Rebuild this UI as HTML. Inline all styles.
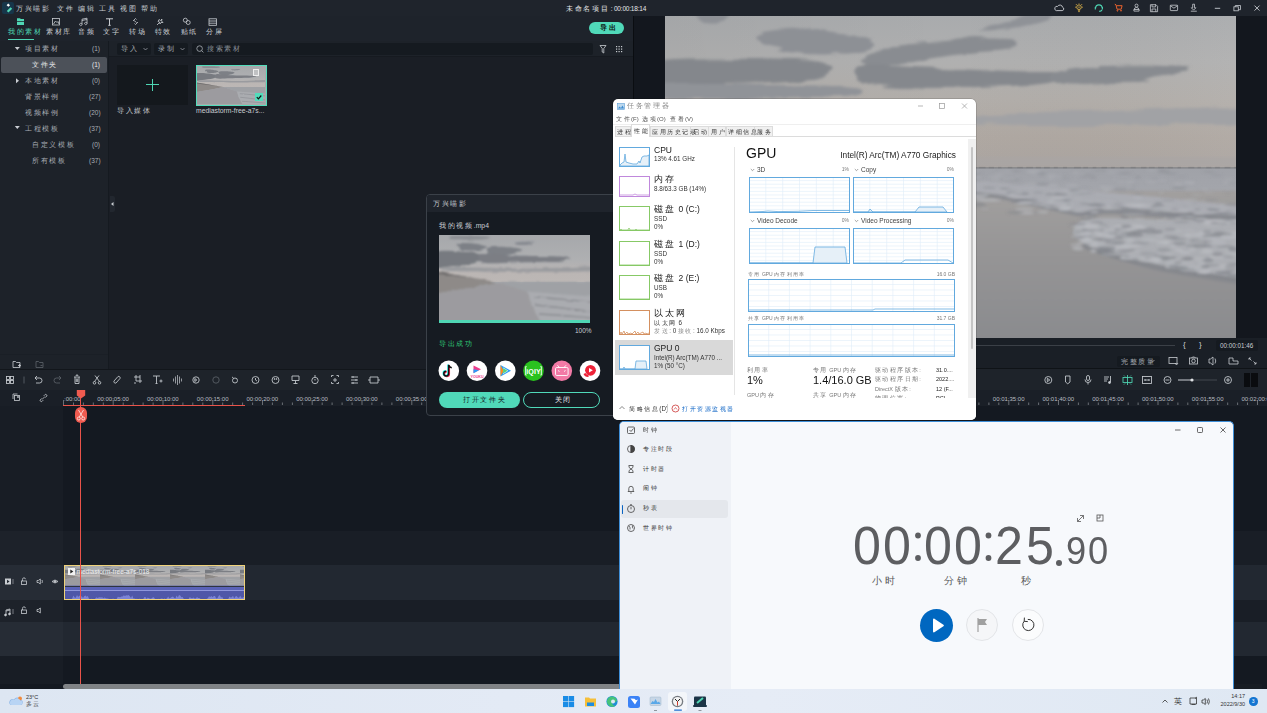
<!DOCTYPE html>
<html><head><meta charset="utf-8">
<style>
*{margin:0;padding:0;box-sizing:border-box}
body{width:1267px;height:713px;overflow:hidden;background:#141921;position:relative;font-family:"Liberation Sans",sans-serif;color:#c9ccd1}
.a{position:absolute}
.t{position:absolute;white-space:nowrap;line-height:1}
.z{letter-spacing:.25em}
</style></head><body>

<svg width="0" height="0" style="position:absolute">
 <defs>
  <linearGradient id="bsky" x1="0" y1="0" x2="0" y2="1"><stop offset="0" stop-color="#a6a8ab"/><stop offset=".3" stop-color="#afb0b2"/><stop offset=".45" stop-color="#bbb6b4"/><stop offset=".55" stop-color="#bcb7b5"/><stop offset=".56" stop-color="#a5a7ab"/><stop offset="1" stop-color="#9d9ea2"/></linearGradient>
  <filter id="bb" x="-10%" y="-10%" width="120%" height="120%"><feTurbulence type="fractalNoise" baseFrequency="0.08 0.35" numOctaves="2" seed="9" result="n"/><feDisplacementMap in="SourceGraphic" in2="n" scale="3" xChannelSelector="R" yChannelSelector="G" result="d"/><feGaussianBlur in="d" stdDeviation="1"/></filter>
  <symbol id="beach" viewBox="0 0 151 85" preserveAspectRatio="none">
   <rect width="151" height="85" fill="url(#bsky)"/>
   <g filter="url(#bb)"><path d="M12.0 1.2C14.5 0.6 23.6 0.7 30.0 0.8C36.4 0.9 48.4 1.4 50.6 2.0C52.8 2.6 48.9 3.9 43.0 4.3C37.1 4.7 20.2 4.8 15.0 4.3C9.8 3.8 9.5 1.8 12.0 1.2Z" fill="#8a8d92"/><path d="M18.0 8.9C19.3 7.8 27.1 7.8 32.0 8.2C36.9 8.6 46.0 10.2 47.5 11.3C49.0 12.4 44.9 14.4 41.0 15.0C37.1 15.6 28.2 16.0 24.4 15.0C20.6 14.0 16.7 10.0 18.0 8.9Z" fill="#7d8086"/><path d="M49.0 12.8C51.6 11.8 60.3 11.7 66.0 12.0C71.7 12.3 81.2 13.4 83.0 14.4C84.8 15.4 80.6 17.2 77.0 18.2C73.4 19.2 65.8 20.5 61.4 20.5C57.0 20.5 52.7 19.5 50.6 18.2C48.5 16.9 46.4 13.8 49.0 12.8Z" fill="#7d8086"/><path d="M77.0 7.4C79.8 6.9 93.4 6.2 95.4 6.6C97.4 7.0 92.0 9.2 89.2 9.7C86.4 10.2 80.4 10.1 78.4 9.7C76.4 9.3 74.2 7.9 77.0 7.4Z" fill="#868990"/><path d="M-2.0 16.7C4.2 14.4 27.7 17.3 35.2 18.2C42.7 19.1 43.0 20.3 43.0 22.0C43.0 23.7 40.4 26.6 35.2 28.2C30.0 29.8 18.2 30.7 12.0 31.3C5.8 31.9 0.3 34.4 -2.0 32.0C-4.3 29.6 -8.2 19.0 -2.0 16.7Z" fill="#777a80"/><path d="M43.0 18.2C48.1 17.0 59.7 19.9 73.8 20.5C87.9 21.1 120.1 21.1 127.8 22.0C135.5 22.9 129.0 25.0 120.0 25.9C111.0 26.8 86.6 27.2 73.8 27.5C61.0 27.8 48.1 29.1 43.0 27.5C37.9 25.9 37.9 19.4 43.0 18.2Z" fill="#7b7e84"/><path d="M12.0 32.0C24.8 31.6 65.5 33.7 89.0 33.6C112.5 33.5 142.3 31.1 153.0 31.5C163.7 31.9 163.7 35.1 153.0 36.0C142.3 36.9 112.5 36.7 89.0 36.7C65.5 36.7 24.8 36.8 12.0 36.0C-0.8 35.2 -0.8 32.4 12.0 32.0Z" fill="#9a9b9f"/>
    <path d="M-2 36.7 L19.8 40.5 58.3 47.2 35.2 52.2 -2 58.3Z" fill="#8e8a88"/>
    <path d="M-2 36.7 L19.8 40.5 58.3 47.2 40 44 -2 39Z" fill="#6f6d6d"/>
    <path d="M-2 58.3 L35.2 52.2 58.3 47.2 89 56.8 92 69 101.5 87 H-2Z" fill="#9c9b9f"/>
    <path d="M58.3 47.2 L153 47 153 61.4 89 56.8Z" fill="#9fa1a5"/>
    <path d="M89 56.8 L153 61.4 153 87 101.5 87 92 69Z" fill="#aaacb0"/>
    <path d="M95 62 C115 63 135 66 153 67 M96 70 C118 72 135 75 153 76 M100 79 C120 80 140 82 153 83" stroke="#8a8c91" stroke-width="1.3" fill="none"/>
   </g>
  </symbol>
 </defs>
</svg>
<!-- title bar -->
<div class="a" id="titlebar" style="left:0;top:0;width:1267px;height:16px;background:#1f242c">
 <div class="a" style="left:2px;top:2px;width:12px;height:12px;background:#17364a;border-radius:2px"></div>
 <svg class="a" style="left:2px;top:2px" width="12" height="12" viewBox="0 0 12 12"><path d="M6.2 1.6 L8 3.2 6.4 4.8 4.6 3.2Z" fill="#fff"/><path d="M8.6 5.2 L10.2 6.8 6.4 10.6 4.8 9Z" fill="#4fd6b4"/></svg>
 <span class="t" style="left:16px;top:5.5px;font-size:6.5px;color:#c9cdd2"><span class="z">万兴喵影</span></span>
 <span class="t" style="left:57px;top:5.5px;font-size:6.5px;color:#c9cdd2"><span class="z">文件</span></span>
 <span class="t" style="left:78px;top:5.5px;font-size:6.5px;color:#c9cdd2"><span class="z">编辑</span></span>
 <span class="t" style="left:99px;top:5.5px;font-size:6.5px;color:#c9cdd2"><span class="z">工具</span></span>
 <span class="t" style="left:120px;top:5.5px;font-size:6.5px;color:#c9cdd2"><span class="z">视图</span></span>
 <span class="t" style="left:141px;top:5.5px;font-size:6.5px;color:#c9cdd2"><span class="z">帮助</span></span>
 <span class="t" style="left:566px;top:5.5px;font-size:6.5px;color:#e6e8ea;letter-spacing:-.2px"><span class="z">未命名项目</span> : 00:00:18:14</span>
 <svg class="a" style="left:1050px;top:0" width="217" height="16" viewBox="0 0 217 16" fill="none" stroke-width=".9">
  <path d="M6.3 10.6H12.2A1.7 1.7 0 0 0 12.6 7.3 2.7 2.7 0 0 0 7.6 6.4 2.1 2.1 0 0 0 6.3 10.6Z" stroke="#c9cdd2"/>
  <g stroke="#d9b04a"><circle cx="29" cy="7.2" r="2.3"/><path d="M27.9 10.2h2.2M28.2 11.6h1.6M26 4.2l.8.8M32 4.2l-.8.8M25.2 7.2h1M31.8 7.2h1M29 3.5v.8"/><path d="M28.3 7.8l.7-1.3.7 1.3" stroke-width=".6"/></g>
  <g stroke="#4fd6b4" stroke-width="1.1"><path d="M45.6 8.2A3.3 3.3 0 0 1 52.2 8.2"/><path d="M45.3 7v2.6M52.4 7v2.6"/><path d="M52 9.8q-.6 1.6-2.8 1.6" /></g>
  <g stroke="#e8622e" stroke-width="1"><path d="M64.8 4.2l1.2.6 1 4.4h4.2l.9-3.5h-5.6"/><circle cx="67.4" cy="10.7" r=".5"/><circle cx="71" cy="10.7" r=".5"/></g>
  <g stroke="#c9cdd2" stroke-width=".8"><circle cx="86.5" cy="5.6" r="1.5"/><path d="M84.2 9.5q0-2 2.3-2t2.3 2M83.9 9.5h5.2v1.6h-5.2Z"/></g>
  <g stroke="#c9cdd2" stroke-width=".8"><path d="M100.4 4.7h5.6l1.6 1.6v5.4h-7.2Z"/><path d="M102 4.7v2.2h3.6V4.7M102 11.7V9h3.8v2.7"/></g>
  <g stroke="#c9cdd2" stroke-width=".8"><rect x="120.3" y="5.2" width="7.3" height="5.4" rx=".5"/><path d="M120.3 5.6l3.65 2.6 3.65-2.6"/></g>
  <g stroke="#c9cdd2" stroke-width=".8"><path d="M142.7 4.2h1.8v3.6h1.4l-2.3 2.3-2.3-2.3h1.4Z"/><path d="M140.8 11.2h6"/></g>
  <path d="M164.8 8.3h5.4" stroke="#c9cdd2"/>
  <g stroke="#c9cdd2" stroke-width=".8"><rect x="183.9" y="6.8" width="4.4" height="4"/><path d="M185.3 6.8V5.5h5.2v4.2h-2.2"/></g>
  <path d="M204.5 5.6l5 5M209.5 5.6l-5 5" stroke="#c9cdd2"/>
 </svg>
</div>
<!-- toolbar -->
<div class="a" id="toolbar" style="left:0;top:16px;width:633px;height:25px;background:#1e232b">
 <svg class="a" style="left:0;top:0" width="230" height="12" viewBox="0 0 230 12" fill="none" stroke="#c9cdd2" stroke-width="0.8">
  <path d="M17 2.2h3l.8.8H24v2H17Z M17 5.8h7v3.2h-7Z" fill="#4fd6b4" stroke="none"/>
  <rect x="52.5" y="2.5" width="7" height="6.5"/><path d="M53.5 8l2-3 1.5 1.5 1-1 1 2.5"/>
  <path d="M82 8.5a1.2 1.2 0 1 1 0-.1V3.2l5-1v5.3a1.2 1.2 0 1 1 0-.1M82 4.5l5-1"/>
  <path d="M106 2.8h7M109.5 2.8v6.5M108.3 9.3h2.4" stroke-width="1"/>
  <path d="M133 5l2.5-2.5 1 1M138 6l-2.5 2.5-1-1M134 4.5l2.5 2"/>
  <path d="M157 9l2.5-2.5M159 3.5l1.5 1 1.5-1.5-.5 2 1.5 1.5h-2l-1 1.5-.5-2-1.5-.5Z"/>
  <circle cx="185.3" cy="4.2" r="2"/><circle cx="188.2" cy="6.5" r="2"/>
  <rect x="209" y="2.8" width="7.5" height="6.5"/><path d="M209 5h7.5M209 7.2h7.5"/>
 </svg>
 <span class="t" style="left:8px;top:13px;font-size:6.5px;color:#4fd6b4"><span class="z">我的素材</span></span>
 <span class="t" style="left:46px;top:13px;font-size:6.5px;color:#c9cdd2"><span class="z">素材库</span></span>
 <span class="t" style="left:78px;top:13px;font-size:6.5px;color:#c9cdd2"><span class="z">音频</span></span>
 <span class="t" style="left:103px;top:13px;font-size:6.5px;color:#c9cdd2"><span class="z">文字</span></span>
 <span class="t" style="left:129px;top:13px;font-size:6.5px;color:#c9cdd2"><span class="z">转场</span></span>
 <span class="t" style="left:154.5px;top:13px;font-size:6.5px;color:#c9cdd2"><span class="z">特效</span></span>
 <span class="t" style="left:180.5px;top:13px;font-size:6.5px;color:#c9cdd2"><span class="z">贴纸</span></span>
 <span class="t" style="left:206px;top:13px;font-size:6.5px;color:#c9cdd2"><span class="z">分屏</span></span>
 <div class="a" style="left:8px;top:23px;width:26px;height:1.3px;background:#4fd6b4"></div>
 <div class="a" style="left:589px;top:6px;width:35px;height:12px;background:#50d9b9;border-radius:6px"></div>
 <span class="t" style="left:600px;top:9px;font-size:6.5px;color:#0b1512;font-weight:bold"><span class="z">导出</span></span>
</div>
<!-- left panel -->
<div class="a" id="leftpanel" style="left:0;top:41px;width:108px;height:328px;background:#1d2229">
 <div class="a" style="left:1px;top:16px;width:106px;height:16px;background:#4c5159;border-radius:2px"></div>
 <svg class="a" style="left:0;top:0" width="30" height="100" viewBox="0 0 30 100" fill="#c9cdd2"><path d="M14.8 6h5l-2.5 3Z"/><path d="M16 37.2v5l3-2.5Z"/><path d="M14.8 85h5l-2.5 3Z"/></svg>
 <span class="t" style="left:25px;top:4.5px;font-size:6.5px;color:#a9aeb5"><span class="z">项目素材</span></span><span class="t" style="left:92px;top:4.5px;font-size:6.5px;color:#a9aeb5">(1)</span>
 <span class="t" style="left:32px;top:20.5px;font-size:6.5px;color:#e8eaec"><span class="z">文件夹</span></span><span class="t" style="left:92px;top:20.5px;font-size:6.5px;color:#e8eaec">(1)</span>
 <span class="t" style="left:25px;top:36.5px;font-size:6.5px;color:#a9aeb5"><span class="z">本地素材</span></span><span class="t" style="left:92px;top:36.5px;font-size:6.5px;color:#a9aeb5">(0)</span>
 <span class="t" style="left:25px;top:52.5px;font-size:6.5px;color:#a9aeb5"><span class="z">背景样例</span></span><span class="t" style="left:89px;top:52.5px;font-size:6.5px;color:#a9aeb5">(27)</span>
 <span class="t" style="left:25px;top:68.5px;font-size:6.5px;color:#a9aeb5"><span class="z">视频样例</span></span><span class="t" style="left:89px;top:68.5px;font-size:6.5px;color:#a9aeb5">(20)</span>
 <span class="t" style="left:25px;top:84.5px;font-size:6.5px;color:#a9aeb5"><span class="z">工程模板</span></span><span class="t" style="left:89px;top:84.5px;font-size:6.5px;color:#a9aeb5">(37)</span>
 <span class="t" style="left:32px;top:100.5px;font-size:6.5px;color:#a9aeb5"><span class="z">自定义模板</span></span><span class="t" style="left:92px;top:100.5px;font-size:6.5px;color:#a9aeb5">(0)</span>
 <span class="t" style="left:32px;top:116.5px;font-size:6.5px;color:#a9aeb5"><span class="z">所有模板</span></span><span class="t" style="left:89px;top:116.5px;font-size:6.5px;color:#a9aeb5">(37)</span>
 <div class="a" style="left:0;top:313px;width:108px;height:1px;background:#1a1f26"></div>
 <svg class="a" style="left:10px;top:318px" width="40" height="10" viewBox="0 0 40 10" fill="none" stroke-width="0.8">
  <path d="M3 2.5h2.5l1 1H10v5H3Z M8 6.5h3M9.5 5v3" stroke="#c9cdd2"/>
  <path d="M26 2.5h2.5l1 1H33v5h-7Z M30.5 6.5h2" stroke="#5d636b"/>
 </svg>
</div>
<div class="a" style="left:108px;top:41px;width:1px;height:328px;background:#151a20"></div>
<!-- media area -->
<div class="a" id="media" style="left:109px;top:41px;width:524px;height:328px;background:#1a1e25">
 <div class="a" style="left:0;top:0;width:524px;height:16px;background:#1d2229"></div>
 <div class="a" style="left:8px;top:2px;width:34px;height:12px;background:#151a20;border-radius:2px"></div>
 <span class="t" style="left:12px;top:5px;font-size:6.5px;color:#a9aeb5"><span class="z">导入</span></span>
 <svg class="a" style="left:34px;top:6px" width="5" height="4" viewBox="0 0 5 4"><path d="M.5 1l2 2 2-2" fill="none" stroke="#a9aeb5" stroke-width=".7"/></svg>
 <div class="a" style="left:45px;top:2px;width:34px;height:12px;background:#151a20;border-radius:2px"></div>
 <span class="t" style="left:49px;top:5px;font-size:6.5px;color:#a9aeb5"><span class="z">录制</span></span>
 <svg class="a" style="left:71px;top:6px" width="5" height="4" viewBox="0 0 5 4"><path d="M.5 1l2 2 2-2" fill="none" stroke="#a9aeb5" stroke-width=".7"/></svg>
 <div class="a" style="left:83px;top:2px;width:401px;height:12px;background:#151a20;border-radius:2px"></div>
 <svg class="a" style="left:86px;top:3px" width="10" height="10" viewBox="0 0 10 10"><circle cx="4.6" cy="4.6" r="2.8" fill="none" stroke="#a9aeb5" stroke-width=".8"/><path d="M6.6 6.6l1.8 1.8" stroke="#a9aeb5" stroke-width=".8"/></svg>
 <span class="t" style="left:98px;top:5px;font-size:6.5px;color:#8a9098"><span class="z">搜索素材</span></span>
 <svg class="a" style="left:489px;top:3px" width="30" height="10" viewBox="0 0 30 10" fill="none" stroke="#c9cdd2" stroke-width=".8"><path d="M2 1.5h6L5.8 4.5V9L4.2 8V4.5Z"/><g fill="#c9cdd2" stroke="none"><rect x="18" y="2" width="1.2" height="1.2"/><rect x="20.5" y="2" width="1.2" height="1.2"/><rect x="23" y="2" width="1.2" height="1.2"/><rect x="18" y="4.5" width="1.2" height="1.2"/><rect x="20.5" y="4.5" width="1.2" height="1.2"/><rect x="23" y="4.5" width="1.2" height="1.2"/><rect x="18" y="7" width="1.2" height="1.2"/><rect x="20.5" y="7" width="1.2" height="1.2"/><rect x="23" y="7" width="1.2" height="1.2"/></g></svg>
 <div class="a" style="left:0;top:15px;width:524px;height:1px;background:#161a20"></div>
 <div class="a" style="left:8px;top:24px;width:71px;height:40px;background:#14181d"></div>
 <div class="a" style="left:42.8px;top:37.5px;width:1.3px;height:12.5px;background:#4fd6b4"></div>
 <div class="a" style="left:37px;top:43.2px;width:13px;height:1.3px;background:#4fd6b4"></div>
 <span class="t" style="left:8px;top:66.5px;font-size:6.5px;color:#c9cdd2"><span class="z">导入媒体</span></span>
 <div class="a" id="mthumb" style="left:87px;top:24px;width:71px;height:41px;border:1.5px solid #52dcbb;overflow:hidden;background:#aaa"><svg class="a" style="left:0;top:0" width="68" height="38"><use href="#beach"/></svg></div>
 <div class="a" style="left:144px;top:28px;width:6px;height:7px;border:1px solid #eee;background:rgba(255,255,255,.25)"></div>
 <div class="a" style="left:146px;top:52px;width:8px;height:8px;background:#52dcbb"></div>
 <svg class="a" style="left:146px;top:52px" width="8" height="8" viewBox="0 0 8 8"><path d="M1.8 4.2l1.6 1.6L6.3 2.5" fill="none" stroke="#111" stroke-width="1.2"/></svg>
 <span class="t" style="left:87px;top:66.5px;font-size:6.8px;color:#c9cdd2">mediastorm-free-a7s...</span>
 <div class="a" style="left:1px;top:155px;width:5px;height:16px;background:#22272f;border-radius:0 2px 2px 0"></div>
 <svg class="a" style="left:1px;top:160px" width="5" height="6" viewBox="0 0 5 6"><path d="M3.5 1v4L1 3Z" fill="#c9cdd2"/></svg>
</div>
<!-- preview -->
<div class="a" id="preview" style="left:633px;top:16px;width:634px;height:353px;background:#13171e"></div>
<div class="a" style="left:632.5px;top:16px;width:1.5px;height:353px;background:#0a0d11"></div>
<svg class="a" id="pimg" style="left:665px;top:16px" width="571" height="322" viewBox="0 0 571 322">
 <defs>
  <linearGradient id="psky" x1="0" y1="0" x2="0" y2="1"><stop offset="0" stop-color="#a9abad"/><stop offset=".3" stop-color="#b0b0b0"/><stop offset=".55" stop-color="#b2aeaa"/><stop offset=".8" stop-color="#afa8a2"/><stop offset="1" stop-color="#aba5a1"/></linearGradient>
  <linearGradient id="psea" x1="0" y1="0" x2="0" y2="1"><stop offset="0" stop-color="#a0a2a8"/><stop offset=".12" stop-color="#a3a5ab"/><stop offset=".3" stop-color="#9a9ca2"/><stop offset=".6" stop-color="#909196"/><stop offset="1" stop-color="#8b8c8f"/></linearGradient>
  <linearGradient id="skyx" x1="0" y1="0" x2="1" y2="0"><stop offset="0" stop-color="#000" stop-opacity=".03"/><stop offset=".5" stop-color="#000" stop-opacity="0"/><stop offset="1" stop-color="#fff" stop-opacity=".04"/></linearGradient>
  <filter id="bl1" x="-10%" y="-10%" width="120%" height="120%"><feGaussianBlur stdDeviation="1.8"/></filter>
  <filter id="bl3" x="-10%" y="-10%" width="120%" height="120%"><feGaussianBlur stdDeviation="3"/></filter>
  <linearGradient id="psand" gradientUnits="userSpaceOnUse" x1="0" y1="176" x2="0" y2="322"><stop offset="0" stop-color="#a19f9e"/><stop offset=".45" stop-color="#959495"/><stop offset="1" stop-color="#8a8b8e"/></linearGradient>
  <filter id="cloudf" x="-5%" y="-20%" width="110%" height="140%"><feTurbulence type="fractalNoise" baseFrequency="0.02 0.12" numOctaves="3" seed="4" result="n"/><feDisplacementMap in="SourceGraphic" in2="n" scale="10" xChannelSelector="R" yChannelSelector="G" result="d"/><feGaussianBlur in="d" stdDeviation="1.8"/></filter>
  <clipPath id="pclip"><rect width="571" height="322"/></clipPath>
 </defs>
 <g clip-path="url(#pclip)">
 <rect width="571" height="152" fill="url(#psky)"/>
 <rect width="571" height="152" fill="url(#skyx)"/>
 <rect y="152" width="571" height="170" fill="url(#psea)"/>
 <g filter="url(#cloudf)"><path d="M31.5 -2.0C34.5 -3.2 60.0 -3.2 63.0 -2.0C66.0 -0.8 57.0 5.6 54.0 6.8C51.0 8.0 43.5 8.0 40.5 6.8C37.5 5.6 28.5 -0.8 31.5 -2.0Z" fill="#8e9196"/><path d="M92.4 18.0C96.6 15.5 122.1 12.3 135.0 12.6C147.9 12.9 178.8 18.4 189.0 20.3C199.2 22.2 210.6 24.9 211.8 27.0C213.0 29.1 206.4 34.5 198.0 36.0C189.6 37.5 161.3 38.9 148.7 38.3C136.1 37.7 111.1 34.2 103.6 31.5C96.1 28.8 88.2 20.5 92.4 18.0Z" fill="#8d9095"/><path d="M198.0 42.8C200.9 39.6 221.3 30.6 234.0 28.0C246.7 25.4 277.3 23.8 293.0 23.4C308.7 23.0 344.9 23.4 351.5 24.8C358.1 26.2 351.0 32.0 342.5 33.8C334.0 35.6 301.3 36.8 288.0 38.3C274.7 39.8 253.1 43.2 243.0 45.0C232.9 46.8 218.0 52.1 212.0 51.8C206.0 51.5 195.1 46.0 198.0 42.8Z" fill="#898c91"/><path d="M194.0 49.6C203.6 47.5 244.2 50.9 270.0 51.8C295.8 52.7 373.1 54.2 387.6 56.3C402.1 58.4 394.2 65.5 378.5 67.6C362.8 69.7 294.1 72.0 270.0 72.0C245.9 72.0 208.1 70.6 198.0 67.6C187.9 64.6 184.4 51.7 194.0 49.6Z" fill="#85888d"/><path d="M-5.0 45.0C4.7 41.7 47.1 42.8 67.6 42.8C88.1 42.8 135.5 43.8 148.7 45.0C161.9 46.2 166.7 49.4 166.7 51.8C166.7 54.2 161.9 60.9 148.7 63.0C135.5 65.1 88.1 67.0 67.6 67.6C47.1 68.2 4.7 70.6 -5.0 67.6C-14.7 64.6 -14.7 48.3 -5.0 45.0Z" fill="#84878c"/><path d="M-5.0 68.0C7.7 66.4 64.1 69.3 90.0 69.8C115.9 70.3 177.0 70.5 189.0 72.0C201.0 73.5 205.9 79.7 180.0 81.0C154.1 82.3 19.7 83.7 -5.0 82.0C-29.7 80.3 -17.7 69.6 -5.0 68.0Z" fill="#909398"/><path d="M387.6 56.3C392.4 54.0 414.8 51.4 428.0 50.5C441.2 49.6 474.1 49.3 486.7 49.6C499.3 49.9 522.8 51.2 522.8 53.0C522.8 54.8 499.3 60.8 486.7 63.0C474.1 65.2 440.6 69.2 428.0 69.8C415.4 70.4 397.4 69.4 392.0 67.6C386.6 65.8 382.8 58.6 387.6 56.3Z" fill="#888b90"/><path d="M315.5 13.5C316.7 12.0 341.9 4.4 351.5 2.3C361.1 0.2 384.0 -2.6 387.6 -2.0C391.2 -1.4 384.5 4.7 378.5 6.8C372.5 8.9 350.9 12.6 342.5 13.5C334.1 14.4 314.3 15.0 315.5 13.5Z" fill="#8f9297"/><path d="M315.5 99.0C329.4 97.3 385.4 95.9 420.0 95.0C454.6 94.1 554.3 90.3 575.0 92.0C595.7 93.7 595.7 105.7 575.0 108.0C554.3 110.3 454.6 109.0 420.0 109.0C385.4 109.0 329.4 109.3 315.5 108.0C301.6 106.7 301.6 100.7 315.5 99.0Z" fill="#a1a2a5"/></g>
 <rect x="-10" y="141" width="591" height="10" fill="#a9a6a6" opacity=".6" filter="url(#bl1)"/>
 <rect x="0" y="151.3" width="571" height="1.2" fill="#7e8084"/><rect x="0.3" y="150.8" width="6.1" height="1.6" fill="#66686c" opacity=".3"/><rect x="9.9" y="150.8" width="4.9" height="1.6" fill="#66686c" opacity=".3"/><rect x="19.2" y="150.8" width="7.0" height="1.6" fill="#66686c" opacity=".3"/><rect x="28.3" y="150.8" width="6.6" height="1.6" fill="#66686c" opacity=".3"/><rect x="38.0" y="150.8" width="6.2" height="1.6" fill="#66686c" opacity=".3"/><rect x="47.7" y="150.8" width="4.9" height="1.6" fill="#66686c" opacity=".3"/><rect x="56.5" y="150.8" width="6.3" height="1.6" fill="#66686c" opacity=".3"/><rect x="67.2" y="150.8" width="3.5" height="1.6" fill="#66686c" opacity=".3"/><rect x="77.0" y="150.8" width="3.4" height="1.6" fill="#66686c" opacity=".3"/><rect x="86.1" y="150.8" width="5.3" height="1.6" fill="#66686c" opacity=".3"/><rect x="95.9" y="150.8" width="5.0" height="1.6" fill="#66686c" opacity=".3"/><rect x="104.2" y="150.8" width="3.8" height="1.6" fill="#66686c" opacity=".3"/><rect x="115.0" y="150.8" width="4.0" height="1.6" fill="#66686c" opacity=".3"/><rect x="122.6" y="150.8" width="3.1" height="1.6" fill="#66686c" opacity=".3"/><rect x="133.0" y="150.8" width="6.6" height="1.6" fill="#66686c" opacity=".3"/><rect x="141.8" y="150.8" width="5.8" height="1.6" fill="#66686c" opacity=".3"/><rect x="151.9" y="150.8" width="6.8" height="1.6" fill="#66686c" opacity=".3"/><rect x="161.9" y="150.8" width="6.9" height="1.6" fill="#66686c" opacity=".3"/><rect x="171.4" y="150.8" width="4.7" height="1.6" fill="#66686c" opacity=".3"/><rect x="180.4" y="150.8" width="5.9" height="1.6" fill="#66686c" opacity=".3"/><rect x="189.7" y="150.8" width="4.5" height="1.6" fill="#66686c" opacity=".3"/><rect x="198.9" y="150.8" width="6.2" height="1.6" fill="#66686c" opacity=".3"/><rect x="208.8" y="150.8" width="6.4" height="1.6" fill="#66686c" opacity=".3"/><rect x="218.1" y="150.8" width="3.5" height="1.6" fill="#66686c" opacity=".3"/><rect x="227.4" y="150.8" width="3.1" height="1.6" fill="#66686c" opacity=".3"/><rect x="238.0" y="150.8" width="3.9" height="1.6" fill="#66686c" opacity=".3"/><rect x="247.0" y="150.8" width="5.3" height="1.6" fill="#66686c" opacity=".3"/><rect x="256.4" y="150.8" width="4.5" height="1.6" fill="#66686c" opacity=".3"/><rect x="265.4" y="150.8" width="3.0" height="1.6" fill="#66686c" opacity=".3"/><rect x="275.9" y="150.8" width="6.3" height="1.6" fill="#66686c" opacity=".3"/><rect x="284.4" y="150.8" width="6.1" height="1.6" fill="#66686c" opacity=".3"/><rect x="294.0" y="150.8" width="4.9" height="1.6" fill="#66686c" opacity=".3"/><rect x="304.1" y="150.8" width="3.2" height="1.6" fill="#66686c" opacity=".3"/><rect x="313.9" y="150.8" width="6.6" height="1.6" fill="#66686c" opacity=".3"/><rect x="323.9" y="150.8" width="5.1" height="1.6" fill="#66686c" opacity=".3"/><rect x="333.0" y="150.8" width="3.3" height="1.6" fill="#66686c" opacity=".3"/><rect x="342.9" y="150.8" width="4.3" height="1.6" fill="#66686c" opacity=".3"/><rect x="352.3" y="150.8" width="5.5" height="1.6" fill="#66686c" opacity=".3"/><rect x="361.4" y="150.8" width="6.5" height="1.6" fill="#66686c" opacity=".3"/><rect x="370.9" y="150.8" width="4.9" height="1.6" fill="#66686c" opacity=".3"/><rect x="379.1" y="150.8" width="5.6" height="1.6" fill="#66686c" opacity=".3"/><rect x="388.9" y="150.8" width="3.8" height="1.6" fill="#66686c" opacity=".3"/><rect x="398.0" y="150.8" width="4.0" height="1.6" fill="#66686c" opacity=".3"/><rect x="409.2" y="150.8" width="6.6" height="1.6" fill="#66686c" opacity=".3"/><rect x="418.4" y="150.8" width="4.5" height="1.6" fill="#66686c" opacity=".3"/><rect x="427.8" y="150.8" width="3.4" height="1.6" fill="#66686c" opacity=".3"/><rect x="436.5" y="150.8" width="5.4" height="1.6" fill="#66686c" opacity=".3"/><rect x="446.2" y="150.8" width="3.5" height="1.6" fill="#66686c" opacity=".3"/><rect x="455.3" y="150.8" width="3.8" height="1.6" fill="#66686c" opacity=".3"/><rect x="465.8" y="150.8" width="4.8" height="1.6" fill="#66686c" opacity=".3"/><rect x="476.0" y="150.8" width="5.3" height="1.6" fill="#66686c" opacity=".3"/><rect x="484.1" y="150.8" width="5.5" height="1.6" fill="#66686c" opacity=".3"/><rect x="493.1" y="150.8" width="5.8" height="1.6" fill="#66686c" opacity=".3"/><rect x="502.9" y="150.8" width="4.8" height="1.6" fill="#66686c" opacity=".3"/><rect x="512.7" y="150.8" width="3.3" height="1.6" fill="#66686c" opacity=".3"/><rect x="523.3" y="150.8" width="5.9" height="1.6" fill="#66686c" opacity=".3"/><rect x="532.6" y="150.8" width="3.2" height="1.6" fill="#66686c" opacity=".3"/><rect x="541.4" y="150.8" width="4.9" height="1.6" fill="#66686c" opacity=".3"/><rect x="550.2" y="150.8" width="4.6" height="1.6" fill="#66686c" opacity=".3"/><rect x="559.7" y="150.8" width="5.7" height="1.6" fill="#66686c" opacity=".3"/><rect x="569.3" y="150.8" width="5.9" height="1.6" fill="#66686c" opacity=".3"/>
 <g filter="url(#bl1)">
  <rect x="-10" y="175" width="591" height="160" fill="url(#psand)"/>
  <path d="M-10.0 161.0C6.0 160.2 117.9 162.1 150.0 162.5C182.1 162.9 280.0 163.4 311.0 165.0C342.0 166.6 433.0 175.4 460.0 178.0C487.0 180.6 568.9 188.8 581.0 191.0C593.1 193.2 594.5 199.9 581.0 200.0C567.5 200.1 462.9 192.5 446.0 192.0C429.1 191.5 424.6 196.5 412.0 195.0C399.4 193.5 346.2 179.3 320.0 177.0C293.8 174.7 183.0 172.6 150.0 172.0C117.0 171.4 6.0 172.1 -10.0 171.0C-26.0 169.9 -26.0 161.8 -10.0 161.0Z" fill="#aaacb2"/>
  <path d="M-10.0 171.0C6.0 170.7 117.0 171.4 150.0 172.0C183.0 172.6 293.8 174.7 320.0 177.0C346.2 179.3 399.4 193.5 412.0 195.0C424.6 196.5 429.1 191.5 446.0 192.0C462.9 192.5 567.5 198.5 581.0 200.0C594.5 201.5 594.5 207.2 581.0 207.0C567.5 206.8 462.9 198.7 446.0 198.0C429.1 197.3 424.6 201.7 412.0 200.0C399.4 198.3 346.2 183.4 320.0 181.0C293.8 178.6 183.0 176.6 150.0 176.0C117.0 175.4 6.0 175.5 -10.0 175.0C-26.0 174.5 -26.0 171.3 -10.0 171.0Z" fill="#898b91"/>
  <path d="M408.0 217.0C407.5 213.9 411.7 207.0 416.0 205.0C420.3 203.0 428.8 202.1 440.0 202.0C451.2 201.9 481.2 203.2 500.0 204.0C518.8 204.8 570.2 200.1 581.0 208.0C591.8 215.9 591.8 257.4 581.0 263.0C570.2 268.6 517.5 253.3 500.0 250.0C482.5 246.7 460.7 240.9 450.0 238.0C439.3 235.1 425.6 230.8 420.0 228.0C414.4 225.2 408.5 220.1 408.0 217.0Z" fill="#acaeb3"/>
  <path d="M420.0 228.0C423.2 228.6 442.0 235.8 450.0 238.0C458.0 240.2 486.9 247.5 500.0 250.0C513.1 252.5 572.9 261.1 581.0 263.0C589.1 264.9 589.1 269.7 581.0 269.0C572.9 268.3 513.1 258.6 500.0 256.0C486.9 253.4 458.2 245.4 450.0 243.0C441.8 240.6 421.0 233.5 418.0 232.0C415.0 230.5 416.8 227.4 420.0 228.0Z" fill="#86888d"/>
 </g>
 <g filter="url(#bl1)"><ellipse cx="183.1" cy="179.5" rx="3.7" ry="1.1" fill="#b9bbc0" opacity="0.42"/><ellipse cx="289.8" cy="187.8" rx="3.3" ry="1.0" fill="#b9bbc0" opacity="0.44"/><ellipse cx="241.6" cy="180.0" rx="5.0" ry="1.2" fill="#80838a" opacity="0.63"/><ellipse cx="225.5" cy="175.5" rx="11.8" ry="0.6" fill="#80838a" opacity="0.52"/><ellipse cx="78.8" cy="173.1" rx="10.3" ry="0.8" fill="#80838a" opacity="0.66"/><ellipse cx="211.4" cy="179.9" rx="7.9" ry="0.7" fill="#b9bbc0" opacity="0.48"/><ellipse cx="390.3" cy="184.9" rx="8.3" ry="1.1" fill="#b9bbc0" opacity="0.72"/><ellipse cx="401.1" cy="191.5" rx="5.2" ry="1.2" fill="#b9bbc0" opacity="0.75"/><ellipse cx="418.8" cy="187.6" rx="4.1" ry="1.0" fill="#80838a" opacity="0.46"/><ellipse cx="279.1" cy="194.8" rx="3.4" ry="1.3" fill="#80838a" opacity="0.63"/><ellipse cx="503.7" cy="194.3" rx="8.3" ry="1.2" fill="#b9bbc0" opacity="0.74"/><ellipse cx="543.9" cy="207.5" rx="7.3" ry="1.3" fill="#b9bbc0" opacity="0.68"/><ellipse cx="371.0" cy="196.7" rx="5.6" ry="1.0" fill="#80838a" opacity="0.41"/><ellipse cx="263.2" cy="179.8" rx="4.5" ry="0.7" fill="#b9bbc0" opacity="0.71"/><ellipse cx="70.1" cy="169.6" rx="10.8" ry="0.7" fill="#b9bbc0" opacity="0.62"/><ellipse cx="508.2" cy="202.6" rx="10.4" ry="1.5" fill="#b9bbc0" opacity="0.57"/><ellipse cx="203.4" cy="185.9" rx="4.4" ry="0.8" fill="#b9bbc0" opacity="0.49"/><ellipse cx="276.8" cy="172.7" rx="8.3" ry="0.9" fill="#b9bbc0" opacity="0.57"/><ellipse cx="209.5" cy="165.5" rx="9.2" ry="1.1" fill="#80838a" opacity="0.67"/><ellipse cx="26.4" cy="162.8" rx="11.1" ry="1.4" fill="#80838a" opacity="0.72"/><ellipse cx="223.0" cy="175.8" rx="8.7" ry="0.7" fill="#b9bbc0" opacity="0.48"/><ellipse cx="89.3" cy="171.8" rx="6.1" ry="0.7" fill="#b9bbc0" opacity="0.46"/><ellipse cx="54.0" cy="168.1" rx="10.9" ry="1.2" fill="#b9bbc0" opacity="0.50"/><ellipse cx="196.8" cy="177.0" rx="6.3" ry="0.7" fill="#80838a" opacity="0.80"/><ellipse cx="265.7" cy="178.2" rx="3.9" ry="0.9" fill="#b9bbc0" opacity="0.73"/><ellipse cx="88.8" cy="170.6" rx="3.2" ry="1.6" fill="#b9bbc0" opacity="0.46"/><ellipse cx="310.6" cy="189.3" rx="11.8" ry="1.5" fill="#80838a" opacity="0.50"/><ellipse cx="208.1" cy="177.8" rx="4.5" ry="1.4" fill="#b9bbc0" opacity="0.71"/><ellipse cx="186.5" cy="177.0" rx="11.9" ry="1.5" fill="#80838a" opacity="0.73"/><ellipse cx="424.9" cy="200.3" rx="5.0" ry="1.1" fill="#b9bbc0" opacity="0.41"/><ellipse cx="11.2" cy="166.6" rx="9.2" ry="1.6" fill="#b9bbc0" opacity="0.77"/><ellipse cx="569.1" cy="206.2" rx="11.6" ry="1.0" fill="#b9bbc0" opacity="0.49"/><ellipse cx="109.3" cy="173.3" rx="11.1" ry="1.4" fill="#b9bbc0" opacity="0.66"/><ellipse cx="459.6" cy="200.6" rx="3.8" ry="1.3" fill="#80838a" opacity="0.71"/><ellipse cx="430.8" cy="188.7" rx="10.1" ry="0.9" fill="#80838a" opacity="0.79"/><ellipse cx="225.0" cy="178.2" rx="6.6" ry="1.5" fill="#80838a" opacity="0.47"/><ellipse cx="68.8" cy="175.8" rx="10.3" ry="0.7" fill="#80838a" opacity="0.79"/><ellipse cx="376.9" cy="196.7" rx="6.2" ry="1.1" fill="#b9bbc0" opacity="0.41"/><ellipse cx="559.1" cy="198.0" rx="11.4" ry="1.0" fill="#80838a" opacity="0.73"/><ellipse cx="117.6" cy="166.8" rx="5.3" ry="0.9" fill="#b9bbc0" opacity="0.63"/><ellipse cx="145.7" cy="170.9" rx="11.2" ry="1.0" fill="#b9bbc0" opacity="0.63"/><ellipse cx="520.4" cy="199.9" rx="6.8" ry="1.5" fill="#b9bbc0" opacity="0.61"/><ellipse cx="299.2" cy="187.9" rx="4.6" ry="0.6" fill="#80838a" opacity="0.47"/><ellipse cx="270.1" cy="181.3" rx="9.5" ry="1.2" fill="#b9bbc0" opacity="0.61"/><ellipse cx="317.7" cy="184.3" rx="8.0" ry="0.8" fill="#b9bbc0" opacity="0.71"/><ellipse cx="290.0" cy="179.6" rx="8.1" ry="1.4" fill="#80838a" opacity="0.58"/><ellipse cx="350.9" cy="180.0" rx="9.2" ry="1.1" fill="#b9bbc0" opacity="0.59"/><ellipse cx="542.0" cy="200.1" rx="9.3" ry="1.5" fill="#80838a" opacity="0.50"/><ellipse cx="320.1" cy="192.9" rx="4.2" ry="0.7" fill="#b9bbc0" opacity="0.43"/><ellipse cx="134.8" cy="169.3" rx="3.7" ry="1.3" fill="#80838a" opacity="0.76"/><ellipse cx="84.7" cy="168.6" rx="4.3" ry="1.5" fill="#80838a" opacity="0.49"/><ellipse cx="548.4" cy="193.6" rx="6.6" ry="1.1" fill="#80838a" opacity="0.73"/><ellipse cx="88.8" cy="164.9" rx="6.1" ry="0.8" fill="#b9bbc0" opacity="0.69"/><ellipse cx="6.3" cy="169.7" rx="8.0" ry="1.0" fill="#b9bbc0" opacity="0.53"/><ellipse cx="357.5" cy="184.7" rx="11.9" ry="1.4" fill="#80838a" opacity="0.44"/><ellipse cx="149.3" cy="173.3" rx="3.4" ry="1.4" fill="#b9bbc0" opacity="0.45"/><ellipse cx="240.3" cy="186.6" rx="5.3" ry="0.7" fill="#80838a" opacity="0.63"/><ellipse cx="401.9" cy="184.8" rx="3.8" ry="0.7" fill="#80838a" opacity="0.57"/><ellipse cx="37.1" cy="174.8" rx="10.2" ry="0.7" fill="#80838a" opacity="0.43"/><ellipse cx="496.3" cy="194.0" rx="7.1" ry="0.9" fill="#80838a" opacity="0.77"/><ellipse cx="150.6" cy="177.7" rx="5.1" ry="0.7" fill="#b9bbc0" opacity="0.42"/><ellipse cx="112.2" cy="175.9" rx="5.8" ry="0.9" fill="#80838a" opacity="0.52"/><ellipse cx="285.6" cy="183.6" rx="3.2" ry="0.9" fill="#b9bbc0" opacity="0.69"/><ellipse cx="315.2" cy="187.7" rx="4.7" ry="1.1" fill="#80838a" opacity="0.44"/><ellipse cx="470.8" cy="189.4" rx="10.5" ry="1.0" fill="#b9bbc0" opacity="0.68"/><ellipse cx="565.8" cy="204.6" rx="6.1" ry="1.4" fill="#80838a" opacity="0.65"/><ellipse cx="230.1" cy="177.1" rx="4.2" ry="0.7" fill="#80838a" opacity="0.50"/><ellipse cx="89.8" cy="171.8" rx="3.8" ry="1.4" fill="#80838a" opacity="0.67"/><ellipse cx="158.8" cy="174.1" rx="7.1" ry="0.8" fill="#b9bbc0" opacity="0.51"/><ellipse cx="553.8" cy="205.4" rx="11.8" ry="1.1" fill="#b9bbc0" opacity="0.79"/><ellipse cx="174.8" cy="174.7" rx="6.4" ry="1.1" fill="#b9bbc0" opacity="0.48"/><ellipse cx="288.3" cy="182.0" rx="3.0" ry="0.9" fill="#b9bbc0" opacity="0.56"/><ellipse cx="19.2" cy="171.8" rx="5.1" ry="1.2" fill="#b9bbc0" opacity="0.70"/><ellipse cx="377.0" cy="188.5" rx="9.4" ry="1.5" fill="#b9bbc0" opacity="0.53"/><ellipse cx="567.1" cy="207.0" rx="8.8" ry="0.6" fill="#80838a" opacity="0.76"/><ellipse cx="359.5" cy="193.1" rx="9.6" ry="1.4" fill="#b9bbc0" opacity="0.61"/><ellipse cx="288.0" cy="186.4" rx="10.4" ry="1.2" fill="#80838a" opacity="0.67"/><ellipse cx="397.8" cy="181.6" rx="5.1" ry="0.6" fill="#b9bbc0" opacity="0.54"/><ellipse cx="56.0" cy="172.2" rx="8.6" ry="1.2" fill="#80838a" opacity="0.60"/><ellipse cx="-3.1" cy="161.5" rx="10.2" ry="1.3" fill="#b9bbc0" opacity="0.61"/><ellipse cx="378.1" cy="195.4" rx="5.3" ry="0.7" fill="#b9bbc0" opacity="0.69"/><ellipse cx="114.2" cy="174.9" rx="9.7" ry="1.6" fill="#b9bbc0" opacity="0.55"/><ellipse cx="273.3" cy="177.4" rx="8.6" ry="1.2" fill="#b9bbc0" opacity="0.46"/><ellipse cx="142.5" cy="165.3" rx="9.7" ry="0.9" fill="#80838a" opacity="0.40"/><ellipse cx="30.2" cy="167.1" rx="9.2" ry="1.3" fill="#b9bbc0" opacity="0.61"/><ellipse cx="265.0" cy="187.7" rx="7.2" ry="0.7" fill="#80838a" opacity="0.48"/><ellipse cx="563.3" cy="202.8" rx="7.1" ry="1.4" fill="#80838a" opacity="0.58"/><ellipse cx="151.1" cy="173.2" rx="4.9" ry="1.5" fill="#b9bbc0" opacity="0.63"/><ellipse cx="77.4" cy="157.6" rx="4.2" ry="1.4" fill="#b9bbc0" opacity="0.75"/><ellipse cx="403.6" cy="187.9" rx="5.1" ry="1.5" fill="#b9bbc0" opacity="0.41"/><ellipse cx="-2.9" cy="161.6" rx="5.7" ry="0.7" fill="#b9bbc0" opacity="0.53"/><ellipse cx="483.2" cy="196.0" rx="3.0" ry="1.4" fill="#80838a" opacity="0.45"/><ellipse cx="533.2" cy="197.1" rx="5.6" ry="1.0" fill="#b9bbc0" opacity="0.80"/><ellipse cx="337.3" cy="174.6" rx="6.2" ry="1.0" fill="#b9bbc0" opacity="0.42"/><ellipse cx="54.1" cy="170.9" rx="11.4" ry="0.8" fill="#b9bbc0" opacity="0.60"/><ellipse cx="105.3" cy="167.6" rx="6.4" ry="1.6" fill="#80838a" opacity="0.72"/><ellipse cx="361.6" cy="197.0" rx="7.9" ry="1.3" fill="#b9bbc0" opacity="0.69"/><ellipse cx="256.9" cy="173.6" rx="9.8" ry="1.2" fill="#b9bbc0" opacity="0.42"/><ellipse cx="533.5" cy="203.5" rx="6.1" ry="0.9" fill="#80838a" opacity="0.79"/><ellipse cx="146.2" cy="177.3" rx="8.9" ry="0.9" fill="#80838a" opacity="0.56"/><ellipse cx="92.2" cy="172.3" rx="11.2" ry="1.1" fill="#b9bbc0" opacity="0.76"/><ellipse cx="574.0" cy="205.7" rx="7.0" ry="0.7" fill="#b9bbc0" opacity="0.44"/><ellipse cx="193.7" cy="179.0" rx="5.3" ry="1.2" fill="#80838a" opacity="0.70"/><ellipse cx="234.8" cy="180.4" rx="6.7" ry="1.1" fill="#b9bbc0" opacity="0.54"/><ellipse cx="31.1" cy="165.7" rx="4.1" ry="1.1" fill="#80838a" opacity="0.75"/><ellipse cx="120.5" cy="184.8" rx="5.4" ry="0.8" fill="#b9bbc0" opacity="0.58"/><ellipse cx="549.2" cy="206.8" rx="3.2" ry="0.6" fill="#80838a" opacity="0.76"/><ellipse cx="270.0" cy="172.3" rx="8.3" ry="0.6" fill="#b9bbc0" opacity="0.77"/><ellipse cx="474.7" cy="203.3" rx="5.2" ry="0.7" fill="#b9bbc0" opacity="0.61"/><ellipse cx="391.3" cy="178.3" rx="11.5" ry="1.3" fill="#80838a" opacity="0.71"/><ellipse cx="260.7" cy="178.7" rx="10.0" ry="0.8" fill="#80838a" opacity="0.66"/><ellipse cx="171.5" cy="174.2" rx="4.2" ry="0.9" fill="#80838a" opacity="0.68"/><ellipse cx="60.1" cy="174.6" rx="8.2" ry="1.0" fill="#b9bbc0" opacity="0.64"/><ellipse cx="1.1" cy="169.7" rx="5.7" ry="1.1" fill="#80838a" opacity="0.66"/><ellipse cx="508.5" cy="194.0" rx="5.2" ry="1.6" fill="#80838a" opacity="0.52"/><ellipse cx="7.7" cy="167.8" rx="7.5" ry="1.3" fill="#b9bbc0" opacity="0.50"/><ellipse cx="382.7" cy="191.5" rx="3.3" ry="0.9" fill="#b9bbc0" opacity="0.67"/><ellipse cx="110.1" cy="169.8" rx="10.2" ry="1.3" fill="#b9bbc0" opacity="0.48"/><ellipse cx="558.5" cy="198.1" rx="5.1" ry="0.8" fill="#80838a" opacity="0.52"/><ellipse cx="548.1" cy="209.3" rx="7.5" ry="0.8" fill="#b9bbc0" opacity="0.57"/><ellipse cx="381.5" cy="190.9" rx="6.5" ry="0.8" fill="#80838a" opacity="0.46"/><ellipse cx="25.1" cy="166.9" rx="3.5" ry="1.0" fill="#80838a" opacity="0.75"/><ellipse cx="420.7" cy="202.6" rx="6.0" ry="0.8" fill="#80838a" opacity="0.70"/><ellipse cx="13.5" cy="167.2" rx="9.0" ry="1.0" fill="#b9bbc0" opacity="0.53"/><ellipse cx="93.3" cy="174.6" rx="6.2" ry="1.6" fill="#b9bbc0" opacity="0.79"/><ellipse cx="115.5" cy="171.7" rx="6.2" ry="1.4" fill="#80838a" opacity="0.57"/><ellipse cx="23.6" cy="163.0" rx="11.3" ry="0.8" fill="#b9bbc0" opacity="0.76"/><ellipse cx="12.6" cy="168.2" rx="6.7" ry="1.4" fill="#80838a" opacity="0.42"/><ellipse cx="15.3" cy="177.8" rx="5.3" ry="1.3" fill="#80838a" opacity="0.54"/><ellipse cx="153.2" cy="177.9" rx="11.6" ry="1.2" fill="#b9bbc0" opacity="0.69"/><ellipse cx="178.9" cy="175.0" rx="9.8" ry="1.5" fill="#80838a" opacity="0.78"/><ellipse cx="9.1" cy="167.7" rx="5.1" ry="1.1" fill="#80838a" opacity="0.78"/><ellipse cx="219.6" cy="177.4" rx="7.4" ry="1.5" fill="#b9bbc0" opacity="0.72"/><ellipse cx="424.1" cy="196.6" rx="10.4" ry="1.4" fill="#80838a" opacity="0.53"/><ellipse cx="180.7" cy="169.5" rx="3.7" ry="0.8" fill="#80838a" opacity="0.50"/><ellipse cx="32.6" cy="174.7" rx="3.3" ry="1.2" fill="#b9bbc0" opacity="0.79"/><ellipse cx="508.3" cy="201.6" rx="3.8" ry="0.7" fill="#b9bbc0" opacity="0.68"/><ellipse cx="254.7" cy="179.3" rx="5.1" ry="1.0" fill="#80838a" opacity="0.67"/><ellipse cx="429.6" cy="195.9" rx="4.1" ry="1.4" fill="#b9bbc0" opacity="0.63"/><ellipse cx="211.7" cy="170.9" rx="9.6" ry="0.8" fill="#b9bbc0" opacity="0.50"/><ellipse cx="84.1" cy="175.1" rx="5.9" ry="1.0" fill="#80838a" opacity="0.60"/><ellipse cx="129.4" cy="168.0" rx="10.3" ry="1.3" fill="#80838a" opacity="0.44"/><ellipse cx="270.8" cy="184.7" rx="11.2" ry="0.6" fill="#b9bbc0" opacity="0.45"/><ellipse cx="105.1" cy="162.5" rx="11.8" ry="1.2" fill="#80838a" opacity="0.55"/><ellipse cx="498.2" cy="193.2" rx="10.0" ry="1.5" fill="#b9bbc0" opacity="0.64"/><ellipse cx="355.2" cy="187.6" rx="5.0" ry="1.0" fill="#b9bbc0" opacity="0.48"/><ellipse cx="143.1" cy="167.2" rx="4.8" ry="0.6" fill="#b9bbc0" opacity="0.67"/><ellipse cx="102.6" cy="166.8" rx="5.8" ry="0.8" fill="#80838a" opacity="0.62"/><ellipse cx="31.8" cy="172.0" rx="8.0" ry="1.2" fill="#b9bbc0" opacity="0.47"/><ellipse cx="399.0" cy="192.4" rx="6.7" ry="0.9" fill="#b9bbc0" opacity="0.78"/><ellipse cx="176.5" cy="170.6" rx="6.7" ry="1.5" fill="#80838a" opacity="0.55"/><ellipse cx="109.6" cy="169.5" rx="9.6" ry="0.8" fill="#b9bbc0" opacity="0.76"/><ellipse cx="241.2" cy="181.0" rx="10.9" ry="1.1" fill="#b9bbc0" opacity="0.41"/><ellipse cx="315.4" cy="179.0" rx="8.8" ry="1.5" fill="#b9bbc0" opacity="0.65"/><ellipse cx="210.5" cy="174.1" rx="5.5" ry="1.1" fill="#80838a" opacity="0.44"/><ellipse cx="280.0" cy="181.2" rx="10.2" ry="1.6" fill="#b9bbc0" opacity="0.45"/><ellipse cx="542.9" cy="206.0" rx="3.5" ry="1.5" fill="#b9bbc0" opacity="0.76"/><ellipse cx="355.4" cy="185.5" rx="10.4" ry="0.8" fill="#80838a" opacity="0.49"/><ellipse cx="230.0" cy="183.4" rx="4.6" ry="0.8" fill="#b9bbc0" opacity="0.61"/><ellipse cx="217.9" cy="169.6" rx="4.1" ry="0.8" fill="#80838a" opacity="0.76"/><ellipse cx="18.9" cy="159.8" rx="3.3" ry="1.4" fill="#b9bbc0" opacity="0.64"/><ellipse cx="314.6" cy="180.3" rx="8.6" ry="0.9" fill="#b9bbc0" opacity="0.63"/><ellipse cx="242.4" cy="175.9" rx="6.9" ry="0.6" fill="#80838a" opacity="0.60"/><ellipse cx="131.7" cy="167.9" rx="9.9" ry="1.4" fill="#b9bbc0" opacity="0.47"/><ellipse cx="269.9" cy="182.7" rx="6.9" ry="0.7" fill="#b9bbc0" opacity="0.60"/><ellipse cx="18.7" cy="169.2" rx="8.7" ry="0.7" fill="#80838a" opacity="0.71"/><ellipse cx="292.2" cy="187.6" rx="6.4" ry="1.6" fill="#b9bbc0" opacity="0.74"/><ellipse cx="573.7" cy="204.8" rx="9.6" ry="1.4" fill="#b9bbc0" opacity="0.79"/><ellipse cx="280.8" cy="192.0" rx="4.5" ry="1.4" fill="#80838a" opacity="0.43"/><ellipse cx="198.9" cy="173.2" rx="9.8" ry="0.8" fill="#80838a" opacity="0.51"/><ellipse cx="468.9" cy="198.3" rx="11.3" ry="0.8" fill="#b9bbc0" opacity="0.60"/><ellipse cx="180.4" cy="179.8" rx="3.3" ry="0.8" fill="#b9bbc0" opacity="0.77"/><ellipse cx="389.9" cy="191.2" rx="10.1" ry="0.7" fill="#b9bbc0" opacity="0.65"/><ellipse cx="204.0" cy="174.7" rx="10.9" ry="1.2" fill="#80838a" opacity="0.75"/><ellipse cx="55.8" cy="176.0" rx="6.5" ry="1.4" fill="#b9bbc0" opacity="0.80"/><ellipse cx="330.4" cy="184.3" rx="6.2" ry="1.4" fill="#b9bbc0" opacity="0.47"/><ellipse cx="427.0" cy="200.3" rx="5.3" ry="1.2" fill="#80838a" opacity="0.63"/><ellipse cx="380.6" cy="190.9" rx="5.8" ry="0.6" fill="#b9bbc0" opacity="0.46"/><ellipse cx="352.9" cy="180.7" rx="11.1" ry="0.7" fill="#b9bbc0" opacity="0.66"/><ellipse cx="8.0" cy="169.7" rx="3.0" ry="1.0" fill="#b9bbc0" opacity="0.54"/><ellipse cx="125.3" cy="166.4" rx="4.8" ry="1.2" fill="#b9bbc0" opacity="0.45"/><ellipse cx="539.2" cy="196.7" rx="5.2" ry="0.7" fill="#b9bbc0" opacity="0.66"/><ellipse cx="501.2" cy="198.1" rx="5.4" ry="0.6" fill="#80838a" opacity="0.62"/><ellipse cx="198.5" cy="171.2" rx="8.8" ry="1.0" fill="#80838a" opacity="0.69"/><ellipse cx="139.4" cy="174.1" rx="7.8" ry="1.0" fill="#b9bbc0" opacity="0.42"/><ellipse cx="447.5" cy="192.2" rx="3.1" ry="1.2" fill="#80838a" opacity="0.46"/><ellipse cx="110.9" cy="166.8" rx="8.8" ry="1.4" fill="#b9bbc0" opacity="0.52"/><ellipse cx="169.5" cy="170.8" rx="3.4" ry="1.5" fill="#80838a" opacity="0.69"/><ellipse cx="-1.3" cy="171.7" rx="7.2" ry="1.3" fill="#b9bbc0" opacity="0.49"/><ellipse cx="56.2" cy="162.1" rx="5.1" ry="0.6" fill="#b9bbc0" opacity="0.70"/><ellipse cx="398.9" cy="193.9" rx="5.4" ry="1.2" fill="#b9bbc0" opacity="0.72"/><ellipse cx="299.0" cy="176.0" rx="5.4" ry="1.2" fill="#80838a" opacity="0.49"/><ellipse cx="506.3" cy="201.4" rx="5.1" ry="1.3" fill="#80838a" opacity="0.70"/><ellipse cx="184.9" cy="175.8" rx="10.9" ry="0.9" fill="#b9bbc0" opacity="0.76"/><ellipse cx="361.4" cy="184.2" rx="11.8" ry="1.1" fill="#80838a" opacity="0.68"/><ellipse cx="493.2" cy="189.6" rx="6.9" ry="1.3" fill="#80838a" opacity="0.52"/><ellipse cx="118.2" cy="170.3" rx="11.2" ry="0.7" fill="#b9bbc0" opacity="0.44"/><ellipse cx="534.7" cy="198.3" rx="6.1" ry="0.7" fill="#b9bbc0" opacity="0.42"/><ellipse cx="397.4" cy="184.2" rx="9.6" ry="0.7" fill="#80838a" opacity="0.55"/><ellipse cx="470.0" cy="188.9" rx="10.4" ry="1.5" fill="#b9bbc0" opacity="0.75"/><ellipse cx="526.3" cy="201.3" rx="4.9" ry="0.7" fill="#b9bbc0" opacity="0.74"/><ellipse cx="466.8" cy="193.6" rx="8.7" ry="1.4" fill="#80838a" opacity="0.51"/><ellipse cx="53.0" cy="175.7" rx="4.8" ry="0.9" fill="#b9bbc0" opacity="0.41"/><ellipse cx="144.1" cy="178.0" rx="5.5" ry="1.3" fill="#b9bbc0" opacity="0.53"/><ellipse cx="555.1" cy="191.6" rx="8.6" ry="0.6" fill="#b9bbc0" opacity="0.57"/><ellipse cx="444.1" cy="192.5" rx="6.1" ry="1.3" fill="#b9bbc0" opacity="0.49"/><ellipse cx="496.0" cy="204.5" rx="4.5" ry="0.6" fill="#b9bbc0" opacity="0.70"/><ellipse cx="563.1" cy="207.0" rx="3.0" ry="1.1" fill="#b9bbc0" opacity="0.72"/><ellipse cx="102.2" cy="166.4" rx="10.5" ry="0.9" fill="#80838a" opacity="0.51"/><ellipse cx="119.7" cy="172.0" rx="9.3" ry="1.1" fill="#b9bbc0" opacity="0.65"/><ellipse cx="42.0" cy="170.2" rx="10.1" ry="1.2" fill="#b9bbc0" opacity="0.56"/><ellipse cx="224.3" cy="170.2" rx="11.0" ry="0.7" fill="#80838a" opacity="0.41"/><ellipse cx="114.8" cy="170.7" rx="7.5" ry="1.0" fill="#80838a" opacity="0.49"/><ellipse cx="262.8" cy="190.9" rx="7.8" ry="1.4" fill="#80838a" opacity="0.66"/><ellipse cx="197.5" cy="174.8" rx="10.6" ry="1.3" fill="#80838a" opacity="0.47"/><ellipse cx="249.9" cy="181.9" rx="10.0" ry="1.2" fill="#b9bbc0" opacity="0.58"/><ellipse cx="509.3" cy="198.0" rx="5.7" ry="1.3" fill="#80838a" opacity="0.46"/><ellipse cx="85.6" cy="173.5" rx="5.2" ry="0.9" fill="#b9bbc0" opacity="0.46"/><ellipse cx="185.6" cy="180.5" rx="9.6" ry="0.7" fill="#80838a" opacity="0.44"/><ellipse cx="218.2" cy="190.0" rx="11.9" ry="1.4" fill="#80838a" opacity="0.57"/><ellipse cx="109.0" cy="169.8" rx="4.9" ry="1.0" fill="#b9bbc0" opacity="0.56"/><ellipse cx="454.6" cy="191.7" rx="9.2" ry="1.1" fill="#80838a" opacity="0.59"/><ellipse cx="77.4" cy="165.8" rx="9.7" ry="1.5" fill="#b9bbc0" opacity="0.63"/><ellipse cx="430.2" cy="188.6" rx="6.8" ry="0.8" fill="#80838a" opacity="0.75"/><ellipse cx="444.7" cy="189.8" rx="9.1" ry="1.2" fill="#b9bbc0" opacity="0.53"/><ellipse cx="360.0" cy="177.4" rx="3.9" ry="1.0" fill="#80838a" opacity="0.69"/><ellipse cx="360.8" cy="186.7" rx="7.1" ry="1.2" fill="#b9bbc0" opacity="0.67"/><ellipse cx="535.4" cy="205.0" rx="4.6" ry="1.3" fill="#80838a" opacity="0.56"/><ellipse cx="279.6" cy="182.6" rx="7.9" ry="0.8" fill="#80838a" opacity="0.78"/><ellipse cx="296.7" cy="182.1" rx="3.9" ry="1.2" fill="#b9bbc0" opacity="0.69"/><ellipse cx="292.6" cy="176.1" rx="7.7" ry="1.0" fill="#80838a" opacity="0.48"/><ellipse cx="392.6" cy="181.8" rx="6.5" ry="1.4" fill="#b9bbc0" opacity="0.79"/><ellipse cx="201.5" cy="180.1" rx="6.6" ry="0.6" fill="#b9bbc0" opacity="0.57"/><ellipse cx="400.7" cy="191.0" rx="6.2" ry="0.9" fill="#b9bbc0" opacity="0.70"/><ellipse cx="541.1" cy="196.8" rx="10.2" ry="1.0" fill="#b9bbc0" opacity="0.45"/><ellipse cx="446.2" cy="192.3" rx="10.3" ry="1.2" fill="#b9bbc0" opacity="0.62"/><ellipse cx="126.3" cy="176.8" rx="8.7" ry="1.4" fill="#80838a" opacity="0.59"/><ellipse cx="166.0" cy="173.3" rx="7.9" ry="0.7" fill="#80838a" opacity="0.54"/><ellipse cx="489.2" cy="195.6" rx="5.3" ry="1.0" fill="#b9bbc0" opacity="0.40"/><ellipse cx="414.4" cy="195.4" rx="5.5" ry="0.8" fill="#b9bbc0" opacity="0.59"/><ellipse cx="244.0" cy="174.2" rx="6.3" ry="1.5" fill="#80838a" opacity="0.42"/><ellipse cx="476.0" cy="189.6" rx="11.2" ry="1.4" fill="#b9bbc0" opacity="0.73"/><ellipse cx="362.9" cy="187.6" rx="11.6" ry="1.3" fill="#b9bbc0" opacity="0.44"/><ellipse cx="77.9" cy="169.9" rx="5.1" ry="1.4" fill="#b9bbc0" opacity="0.46"/><ellipse cx="520.3" cy="199.4" rx="11.0" ry="1.2" fill="#80838a" opacity="0.67"/><ellipse cx="514.4" cy="195.2" rx="10.1" ry="1.4" fill="#b9bbc0" opacity="0.68"/><ellipse cx="303.4" cy="182.5" rx="10.9" ry="1.2" fill="#b9bbc0" opacity="0.49"/><ellipse cx="76.0" cy="164.4" rx="7.4" ry="0.7" fill="#b9bbc0" opacity="0.46"/><ellipse cx="280.5" cy="175.1" rx="10.8" ry="0.6" fill="#80838a" opacity="0.59"/><ellipse cx="321.9" cy="184.1" rx="9.0" ry="1.4" fill="#b9bbc0" opacity="0.57"/><ellipse cx="553.1" cy="207.5" rx="8.7" ry="0.6" fill="#80838a" opacity="0.67"/><ellipse cx="536.2" cy="203.1" rx="6.0" ry="1.6" fill="#b9bbc0" opacity="0.59"/><ellipse cx="516.5" cy="206.1" rx="8.6" ry="0.9" fill="#80838a" opacity="0.55"/><ellipse cx="270.7" cy="182.3" rx="7.7" ry="1.4" fill="#b9bbc0" opacity="0.57"/><ellipse cx="240.4" cy="169.9" rx="5.6" ry="1.4" fill="#b9bbc0" opacity="0.60"/><ellipse cx="152.9" cy="170.5" rx="7.6" ry="1.6" fill="#80838a" opacity="0.72"/><ellipse cx="187.3" cy="173.8" rx="8.3" ry="1.2" fill="#80838a" opacity="0.42"/><ellipse cx="414.9" cy="194.4" rx="11.0" ry="1.1" fill="#b9bbc0" opacity="0.52"/><ellipse cx="-1.4" cy="171.2" rx="8.5" ry="1.3" fill="#80838a" opacity="0.76"/><ellipse cx="350.4" cy="196.5" rx="8.6" ry="1.2" fill="#80838a" opacity="0.64"/><ellipse cx="487.3" cy="162.6" rx="6.0" ry="0.7" fill="#878a90" opacity="0.34"/><ellipse cx="349.9" cy="155.2" rx="6.6" ry="0.9" fill="#878a90" opacity="0.45"/><ellipse cx="526.2" cy="187.3" rx="5.4" ry="0.6" fill="#b5b7bc" opacity="0.47"/><ellipse cx="387.6" cy="169.2" rx="5.9" ry="1.0" fill="#b5b7bc" opacity="0.53"/><ellipse cx="310.8" cy="157.7" rx="6.9" ry="0.7" fill="#878a90" opacity="0.48"/><ellipse cx="303.9" cy="166.1" rx="5.6" ry="1.0" fill="#878a90" opacity="0.49"/><ellipse cx="413.4" cy="157.7" rx="5.9" ry="0.5" fill="#b5b7bc" opacity="0.31"/><ellipse cx="301.3" cy="175.2" rx="2.7" ry="1.0" fill="#b5b7bc" opacity="0.65"/><ellipse cx="335.5" cy="154.6" rx="6.3" ry="0.5" fill="#878a90" opacity="0.37"/><ellipse cx="313.8" cy="178.5" rx="6.3" ry="0.9" fill="#878a90" opacity="0.33"/><ellipse cx="472.9" cy="182.1" rx="4.8" ry="1.0" fill="#b5b7bc" opacity="0.69"/><ellipse cx="497.2" cy="154.5" rx="2.1" ry="0.8" fill="#878a90" opacity="0.33"/><ellipse cx="385.5" cy="179.7" rx="3.0" ry="0.9" fill="#b5b7bc" opacity="0.32"/><ellipse cx="401.1" cy="174.7" rx="4.6" ry="0.8" fill="#b5b7bc" opacity="0.62"/><ellipse cx="399.9" cy="177.2" rx="5.8" ry="0.7" fill="#b5b7bc" opacity="0.61"/><ellipse cx="559.9" cy="188.5" rx="5.4" ry="0.6" fill="#b5b7bc" opacity="0.69"/><ellipse cx="493.4" cy="187.7" rx="4.0" ry="0.8" fill="#878a90" opacity="0.63"/><ellipse cx="465.3" cy="166.1" rx="4.6" ry="0.9" fill="#b5b7bc" opacity="0.57"/><ellipse cx="465.5" cy="189.2" rx="6.8" ry="0.6" fill="#b5b7bc" opacity="0.41"/><ellipse cx="416.2" cy="175.6" rx="6.9" ry="0.9" fill="#b5b7bc" opacity="0.63"/><ellipse cx="523.2" cy="190.6" rx="5.4" ry="0.6" fill="#878a90" opacity="0.62"/><ellipse cx="488.3" cy="190.9" rx="4.1" ry="0.5" fill="#878a90" opacity="0.62"/><ellipse cx="355.1" cy="179.3" rx="7.6" ry="0.5" fill="#878a90" opacity="0.57"/><ellipse cx="428.0" cy="161.7" rx="3.5" ry="0.9" fill="#878a90" opacity="0.48"/><ellipse cx="324.1" cy="180.0" rx="6.6" ry="0.5" fill="#878a90" opacity="0.66"/><ellipse cx="543.4" cy="176.5" rx="4.9" ry="0.8" fill="#b5b7bc" opacity="0.38"/><ellipse cx="349.7" cy="177.5" rx="4.2" ry="0.7" fill="#b5b7bc" opacity="0.51"/><ellipse cx="341.0" cy="155.5" rx="8.0" ry="0.6" fill="#b5b7bc" opacity="0.55"/><ellipse cx="516.5" cy="160.5" rx="5.6" ry="0.6" fill="#878a90" opacity="0.31"/><ellipse cx="309.2" cy="185.2" rx="7.2" ry="0.7" fill="#878a90" opacity="0.40"/><ellipse cx="514.3" cy="171.8" rx="7.7" ry="0.9" fill="#878a90" opacity="0.69"/><ellipse cx="369.8" cy="155.3" rx="3.2" ry="0.5" fill="#b5b7bc" opacity="0.32"/><ellipse cx="453.3" cy="187.7" rx="4.7" ry="1.0" fill="#878a90" opacity="0.33"/><ellipse cx="464.5" cy="169.6" rx="2.7" ry="1.0" fill="#b5b7bc" opacity="0.53"/><ellipse cx="476.2" cy="192.1" rx="6.0" ry="0.6" fill="#b5b7bc" opacity="0.36"/><ellipse cx="565.6" cy="197.9" rx="3.3" ry="0.4" fill="#b5b7bc" opacity="0.44"/><ellipse cx="548.3" cy="193.3" rx="7.0" ry="0.4" fill="#878a90" opacity="0.58"/><ellipse cx="477.8" cy="193.3" rx="2.3" ry="0.5" fill="#878a90" opacity="0.68"/><ellipse cx="486.1" cy="166.0" rx="5.5" ry="0.9" fill="#b5b7bc" opacity="0.43"/><ellipse cx="370.7" cy="158.3" rx="4.9" ry="0.5" fill="#b5b7bc" opacity="0.36"/><ellipse cx="486.4" cy="154.5" rx="6.3" ry="0.5" fill="#b5b7bc" opacity="0.67"/><ellipse cx="360.7" cy="185.8" rx="7.2" ry="0.9" fill="#b5b7bc" opacity="0.48"/><ellipse cx="326.7" cy="184.0" rx="7.1" ry="0.8" fill="#b5b7bc" opacity="0.44"/><ellipse cx="526.3" cy="174.2" rx="5.8" ry="0.5" fill="#b5b7bc" opacity="0.32"/><ellipse cx="496.3" cy="176.6" rx="2.9" ry="0.9" fill="#b5b7bc" opacity="0.46"/><ellipse cx="342.8" cy="163.0" rx="7.0" ry="0.6" fill="#b5b7bc" opacity="0.50"/><ellipse cx="387.5" cy="185.9" rx="2.7" ry="1.0" fill="#b5b7bc" opacity="0.66"/><ellipse cx="483.8" cy="162.5" rx="4.9" ry="0.6" fill="#b5b7bc" opacity="0.38"/><ellipse cx="400.2" cy="189.7" rx="8.0" ry="1.0" fill="#b5b7bc" opacity="0.42"/><ellipse cx="546.5" cy="156.5" rx="6.4" ry="0.6" fill="#878a90" opacity="0.31"/><ellipse cx="521.9" cy="168.4" rx="2.8" ry="0.4" fill="#878a90" opacity="0.51"/><ellipse cx="351.1" cy="168.6" rx="7.5" ry="0.5" fill="#878a90" opacity="0.36"/><ellipse cx="349.5" cy="179.8" rx="6.3" ry="0.5" fill="#b5b7bc" opacity="0.33"/><ellipse cx="467.4" cy="173.5" rx="3.6" ry="0.5" fill="#878a90" opacity="0.58"/><ellipse cx="523.2" cy="178.6" rx="3.2" ry="0.4" fill="#878a90" opacity="0.46"/><ellipse cx="498.5" cy="156.3" rx="6.9" ry="0.6" fill="#878a90" opacity="0.65"/><ellipse cx="435.6" cy="154.6" rx="7.5" ry="0.7" fill="#878a90" opacity="0.41"/><ellipse cx="351.2" cy="181.9" rx="4.2" ry="0.5" fill="#b5b7bc" opacity="0.54"/><ellipse cx="301.3" cy="170.1" rx="4.7" ry="0.7" fill="#b5b7bc" opacity="0.59"/><ellipse cx="524.5" cy="190.5" rx="3.9" ry="0.8" fill="#b5b7bc" opacity="0.60"/><ellipse cx="316.8" cy="181.8" rx="7.7" ry="0.7" fill="#878a90" opacity="0.51"/><ellipse cx="447.8" cy="154.8" rx="7.8" ry="0.5" fill="#b5b7bc" opacity="0.34"/><ellipse cx="368.9" cy="182.1" rx="2.2" ry="0.5" fill="#878a90" opacity="0.38"/><ellipse cx="304.9" cy="172.7" rx="5.5" ry="0.7" fill="#878a90" opacity="0.34"/><ellipse cx="539.1" cy="184.8" rx="2.3" ry="0.5" fill="#b5b7bc" opacity="0.50"/><ellipse cx="376.9" cy="158.3" rx="4.4" ry="0.5" fill="#878a90" opacity="0.64"/><ellipse cx="340.5" cy="172.9" rx="6.5" ry="0.5" fill="#878a90" opacity="0.68"/><ellipse cx="406.9" cy="169.3" rx="7.0" ry="0.7" fill="#b5b7bc" opacity="0.68"/><ellipse cx="513.6" cy="168.1" rx="3.4" ry="0.6" fill="#b5b7bc" opacity="0.69"/><ellipse cx="521.2" cy="192.4" rx="6.9" ry="0.9" fill="#b5b7bc" opacity="0.51"/><ellipse cx="563.4" cy="195.3" rx="3.5" ry="0.7" fill="#878a90" opacity="0.45"/><ellipse cx="446.0" cy="156.7" rx="4.6" ry="0.7" fill="#b5b7bc" opacity="0.36"/><ellipse cx="566.7" cy="188.4" rx="7.6" ry="0.8" fill="#878a90" opacity="0.65"/><ellipse cx="543.3" cy="155.5" rx="5.8" ry="0.6" fill="#878a90" opacity="0.41"/><ellipse cx="449.1" cy="189.5" rx="5.7" ry="0.6" fill="#878a90" opacity="0.47"/><ellipse cx="561.5" cy="166.7" rx="3.8" ry="0.8" fill="#b5b7bc" opacity="0.54"/><ellipse cx="562.9" cy="176.7" rx="3.6" ry="0.7" fill="#878a90" opacity="0.36"/><ellipse cx="334.1" cy="158.3" rx="3.8" ry="0.6" fill="#b5b7bc" opacity="0.40"/><ellipse cx="324.2" cy="171.6" rx="7.0" ry="0.8" fill="#878a90" opacity="0.56"/><ellipse cx="355.3" cy="178.0" rx="4.8" ry="0.7" fill="#878a90" opacity="0.49"/><ellipse cx="385.4" cy="162.5" rx="3.3" ry="0.7" fill="#b5b7bc" opacity="0.53"/><ellipse cx="303.3" cy="165.0" rx="7.2" ry="0.5" fill="#878a90" opacity="0.50"/><ellipse cx="378.3" cy="188.5" rx="3.8" ry="0.9" fill="#b5b7bc" opacity="0.33"/><ellipse cx="539.6" cy="172.9" rx="2.4" ry="0.6" fill="#b5b7bc" opacity="0.59"/><ellipse cx="330.0" cy="161.3" rx="7.8" ry="0.8" fill="#b5b7bc" opacity="0.43"/><ellipse cx="396.9" cy="178.2" rx="5.7" ry="0.9" fill="#878a90" opacity="0.51"/><ellipse cx="503.2" cy="184.6" rx="6.6" ry="0.7" fill="#878a90" opacity="0.58"/><ellipse cx="551.5" cy="159.5" rx="7.2" ry="0.4" fill="#878a90" opacity="0.53"/><ellipse cx="436.9" cy="190.4" rx="5.4" ry="0.7" fill="#878a90" opacity="0.65"/><ellipse cx="467.0" cy="168.9" rx="4.7" ry="0.7" fill="#878a90" opacity="0.42"/><ellipse cx="407.4" cy="174.2" rx="4.3" ry="0.6" fill="#878a90" opacity="0.64"/><ellipse cx="437.4" cy="170.8" rx="3.1" ry="0.6" fill="#b5b7bc" opacity="0.53"/><ellipse cx="459.9" cy="157.4" rx="7.5" ry="0.6" fill="#878a90" opacity="0.64"/><ellipse cx="563.7" cy="163.0" rx="4.6" ry="0.9" fill="#b5b7bc" opacity="0.32"/><ellipse cx="455.4" cy="173.3" rx="7.5" ry="0.9" fill="#878a90" opacity="0.70"/><ellipse cx="442.3" cy="173.7" rx="6.1" ry="0.6" fill="#b5b7bc" opacity="0.54"/><ellipse cx="396.6" cy="188.0" rx="6.1" ry="0.7" fill="#b5b7bc" opacity="0.45"/><ellipse cx="410.2" cy="174.5" rx="5.4" ry="0.9" fill="#878a90" opacity="0.49"/><ellipse cx="421.0" cy="177.1" rx="8.0" ry="0.6" fill="#878a90" opacity="0.63"/><ellipse cx="346.9" cy="164.6" rx="7.9" ry="0.9" fill="#878a90" opacity="0.34"/><ellipse cx="546.0" cy="183.9" rx="6.9" ry="1.0" fill="#878a90" opacity="0.47"/><ellipse cx="343.0" cy="163.6" rx="5.1" ry="0.7" fill="#b5b7bc" opacity="0.37"/><ellipse cx="473.3" cy="177.9" rx="4.1" ry="1.0" fill="#878a90" opacity="0.32"/><ellipse cx="413.1" cy="182.9" rx="3.8" ry="0.8" fill="#b5b7bc" opacity="0.42"/><ellipse cx="531.6" cy="179.0" rx="6.0" ry="0.5" fill="#b5b7bc" opacity="0.52"/><ellipse cx="373.2" cy="176.4" rx="5.2" ry="1.0" fill="#878a90" opacity="0.46"/><ellipse cx="333.4" cy="159.1" rx="6.6" ry="0.5" fill="#b5b7bc" opacity="0.37"/><ellipse cx="443.7" cy="185.4" rx="5.7" ry="0.9" fill="#b5b7bc" opacity="0.30"/><ellipse cx="511.9" cy="167.4" rx="6.3" ry="0.6" fill="#b5b7bc" opacity="0.41"/><ellipse cx="327.4" cy="183.3" rx="5.5" ry="0.6" fill="#b5b7bc" opacity="0.45"/><ellipse cx="315.0" cy="182.3" rx="5.5" ry="1.0" fill="#b5b7bc" opacity="0.55"/><ellipse cx="368.6" cy="155.5" rx="7.6" ry="0.9" fill="#b5b7bc" opacity="0.66"/><ellipse cx="524.4" cy="166.8" rx="5.6" ry="1.0" fill="#b5b7bc" opacity="0.68"/><ellipse cx="366.8" cy="167.4" rx="6.3" ry="0.5" fill="#b5b7bc" opacity="0.65"/><ellipse cx="433.2" cy="183.9" rx="3.5" ry="0.5" fill="#b5b7bc" opacity="0.37"/><ellipse cx="567.2" cy="166.9" rx="5.4" ry="0.5" fill="#878a90" opacity="0.45"/><ellipse cx="410.9" cy="156.4" rx="2.7" ry="0.9" fill="#b5b7bc" opacity="0.40"/><ellipse cx="352.6" cy="163.5" rx="3.4" ry="0.4" fill="#878a90" opacity="0.44"/><ellipse cx="342.9" cy="177.4" rx="2.6" ry="0.6" fill="#878a90" opacity="0.35"/><ellipse cx="421.9" cy="185.0" rx="6.8" ry="0.5" fill="#b5b7bc" opacity="0.59"/><ellipse cx="403.6" cy="188.7" rx="3.2" ry="1.0" fill="#878a90" opacity="0.39"/><ellipse cx="424.5" cy="158.9" rx="6.2" ry="0.6" fill="#878a90" opacity="0.54"/><ellipse cx="401.2" cy="162.9" rx="5.6" ry="0.5" fill="#878a90" opacity="0.35"/><ellipse cx="441.1" cy="174.6" rx="3.6" ry="0.9" fill="#b5b7bc" opacity="0.56"/><ellipse cx="456.1" cy="166.1" rx="4.3" ry="0.5" fill="#b5b7bc" opacity="0.64"/><ellipse cx="388.3" cy="177.5" rx="2.7" ry="0.7" fill="#b5b7bc" opacity="0.50"/><ellipse cx="381.7" cy="156.3" rx="3.9" ry="0.5" fill="#b5b7bc" opacity="0.59"/><ellipse cx="377.7" cy="168.1" rx="7.5" ry="0.9" fill="#878a90" opacity="0.64"/><ellipse cx="336.3" cy="163.1" rx="2.2" ry="0.8" fill="#878a90" opacity="0.44"/><ellipse cx="413.5" cy="178.2" rx="6.2" ry="0.5" fill="#878a90" opacity="0.44"/><ellipse cx="472.9" cy="161.2" rx="2.7" ry="0.9" fill="#878a90" opacity="0.59"/><ellipse cx="311.1" cy="155.3" rx="3.0" ry="0.5" fill="#b5b7bc" opacity="0.45"/><ellipse cx="310.8" cy="163.8" rx="5.8" ry="0.5" fill="#878a90" opacity="0.53"/><ellipse cx="497.1" cy="164.4" rx="4.6" ry="0.8" fill="#b5b7bc" opacity="0.30"/><ellipse cx="529.4" cy="187.0" rx="3.7" ry="0.4" fill="#878a90" opacity="0.54"/><ellipse cx="313.0" cy="161.7" rx="2.7" ry="0.9" fill="#b5b7bc" opacity="0.67"/><ellipse cx="506.1" cy="157.6" rx="6.2" ry="0.6" fill="#878a90" opacity="0.63"/><ellipse cx="377.3" cy="157.1" rx="7.7" ry="0.7" fill="#878a90" opacity="0.58"/><ellipse cx="503.1" cy="188.2" rx="5.8" ry="0.7" fill="#b5b7bc" opacity="0.58"/><ellipse cx="417.8" cy="172.9" rx="7.6" ry="0.5" fill="#878a90" opacity="0.32"/><ellipse cx="493.3" cy="186.8" rx="3.6" ry="0.7" fill="#878a90" opacity="0.56"/><ellipse cx="449.6" cy="163.6" rx="2.4" ry="0.6" fill="#b5b7bc" opacity="0.38"/><ellipse cx="385.4" cy="158.8" rx="6.2" ry="0.8" fill="#b5b7bc" opacity="0.40"/><ellipse cx="441.7" cy="170.9" rx="7.6" ry="0.6" fill="#b5b7bc" opacity="0.65"/><ellipse cx="339.0" cy="172.6" rx="4.0" ry="0.9" fill="#878a90" opacity="0.60"/><ellipse cx="346.5" cy="176.2" rx="5.6" ry="0.7" fill="#878a90" opacity="0.63"/><ellipse cx="331.5" cy="163.4" rx="4.2" ry="0.5" fill="#b5b7bc" opacity="0.41"/><ellipse cx="354.2" cy="177.7" rx="4.7" ry="0.5" fill="#b5b7bc" opacity="0.49"/><ellipse cx="399.8" cy="160.0" rx="2.4" ry="0.4" fill="#878a90" opacity="0.60"/><ellipse cx="323.1" cy="177.1" rx="7.9" ry="0.7" fill="#b5b7bc" opacity="0.50"/><ellipse cx="419.4" cy="161.0" rx="5.3" ry="0.4" fill="#878a90" opacity="0.56"/><ellipse cx="472.6" cy="191.1" rx="5.9" ry="0.6" fill="#b5b7bc" opacity="0.36"/><ellipse cx="307.6" cy="178.3" rx="7.0" ry="0.6" fill="#b5b7bc" opacity="0.56"/><ellipse cx="532.6" cy="193.5" rx="3.0" ry="0.9" fill="#878a90" opacity="0.60"/><ellipse cx="389.8" cy="160.5" rx="7.0" ry="0.6" fill="#b5b7bc" opacity="0.52"/><ellipse cx="401.6" cy="184.0" rx="3.4" ry="0.4" fill="#878a90" opacity="0.55"/><ellipse cx="525.4" cy="183.8" rx="7.4" ry="1.0" fill="#b5b7bc" opacity="0.50"/><ellipse cx="343.3" cy="163.9" rx="5.5" ry="0.4" fill="#878a90" opacity="0.37"/><ellipse cx="421.9" cy="190.0" rx="2.5" ry="0.4" fill="#b5b7bc" opacity="0.38"/><ellipse cx="498.8" cy="154.1" rx="7.0" ry="0.9" fill="#878a90" opacity="0.47"/><ellipse cx="456.7" cy="230.2" rx="6.6" ry="1.4" fill="#bbbdc2" opacity="0.53"/><ellipse cx="519.9" cy="246.8" rx="9.3" ry="1.0" fill="#bbbdc2" opacity="0.53"/><ellipse cx="503.0" cy="225.1" rx="4.4" ry="0.9" fill="#bbbdc2" opacity="0.53"/><ellipse cx="570.3" cy="259.7" rx="9.1" ry="2.2" fill="#82858b" opacity="0.60"/><ellipse cx="543.8" cy="217.0" rx="7.7" ry="1.7" fill="#bbbdc2" opacity="0.58"/><ellipse cx="567.2" cy="238.8" rx="7.5" ry="1.2" fill="#bbbdc2" opacity="0.70"/><ellipse cx="414.6" cy="210.5" rx="7.8" ry="1.4" fill="#bbbdc2" opacity="0.61"/><ellipse cx="471.4" cy="229.6" rx="5.9" ry="1.5" fill="#bbbdc2" opacity="0.51"/><ellipse cx="428.9" cy="211.6" rx="9.2" ry="1.6" fill="#bbbdc2" opacity="0.69"/><ellipse cx="451.8" cy="211.0" rx="6.7" ry="1.2" fill="#bbbdc2" opacity="0.57"/><ellipse cx="447.4" cy="225.9" rx="3.8" ry="1.5" fill="#bbbdc2" opacity="0.38"/><ellipse cx="477.3" cy="212.3" rx="6.1" ry="2.0" fill="#bbbdc2" opacity="0.64"/><ellipse cx="534.9" cy="218.7" rx="9.9" ry="1.8" fill="#bbbdc2" opacity="0.68"/><ellipse cx="474.7" cy="215.6" rx="9.7" ry="1.6" fill="#82858b" opacity="0.40"/><ellipse cx="538.1" cy="216.5" rx="4.7" ry="1.3" fill="#bbbdc2" opacity="0.59"/><ellipse cx="445.2" cy="216.9" rx="8.0" ry="1.4" fill="#82858b" opacity="0.60"/><ellipse cx="553.9" cy="240.8" rx="9.4" ry="2.0" fill="#bbbdc2" opacity="0.65"/><ellipse cx="466.3" cy="235.2" rx="7.8" ry="2.0" fill="#bbbdc2" opacity="0.50"/><ellipse cx="531.6" cy="254.1" rx="8.1" ry="0.9" fill="#82858b" opacity="0.39"/><ellipse cx="500.6" cy="242.5" rx="3.8" ry="2.1" fill="#82858b" opacity="0.45"/><ellipse cx="441.9" cy="221.1" rx="8.9" ry="1.6" fill="#bbbdc2" opacity="0.36"/><ellipse cx="428.2" cy="229.8" rx="4.3" ry="1.6" fill="#bbbdc2" opacity="0.62"/><ellipse cx="472.8" cy="214.5" rx="9.1" ry="1.6" fill="#82858b" opacity="0.67"/><ellipse cx="566.5" cy="216.6" rx="5.4" ry="1.0" fill="#bbbdc2" opacity="0.70"/><ellipse cx="542.1" cy="215.8" rx="4.3" ry="1.9" fill="#82858b" opacity="0.51"/><ellipse cx="488.5" cy="216.4" rx="8.9" ry="1.4" fill="#82858b" opacity="0.59"/><ellipse cx="422.5" cy="215.3" rx="4.5" ry="2.1" fill="#bbbdc2" opacity="0.37"/><ellipse cx="438.0" cy="218.0" rx="6.3" ry="1.6" fill="#bbbdc2" opacity="0.49"/><ellipse cx="411.0" cy="220.8" rx="5.3" ry="0.8" fill="#bbbdc2" opacity="0.74"/><ellipse cx="417.5" cy="209.6" rx="7.7" ry="1.2" fill="#bbbdc2" opacity="0.55"/><ellipse cx="453.2" cy="226.6" rx="6.7" ry="2.1" fill="#82858b" opacity="0.36"/><ellipse cx="502.5" cy="241.6" rx="9.1" ry="1.9" fill="#82858b" opacity="0.60"/><ellipse cx="469.9" cy="219.0" rx="8.6" ry="2.0" fill="#82858b" opacity="0.62"/><ellipse cx="460.2" cy="234.1" rx="8.2" ry="1.5" fill="#82858b" opacity="0.49"/><ellipse cx="500.9" cy="227.1" rx="3.4" ry="1.3" fill="#bbbdc2" opacity="0.75"/><ellipse cx="489.4" cy="224.3" rx="4.7" ry="1.1" fill="#bbbdc2" opacity="0.40"/><ellipse cx="411.2" cy="228.7" rx="6.2" ry="1.4" fill="#bbbdc2" opacity="0.47"/><ellipse cx="437.9" cy="209.0" rx="5.1" ry="1.2" fill="#82858b" opacity="0.57"/><ellipse cx="564.7" cy="231.9" rx="9.4" ry="1.6" fill="#bbbdc2" opacity="0.42"/><ellipse cx="505.8" cy="250.7" rx="5.5" ry="1.9" fill="#bbbdc2" opacity="0.70"/><ellipse cx="421.2" cy="219.6" rx="9.3" ry="1.2" fill="#bbbdc2" opacity="0.36"/><ellipse cx="437.2" cy="215.1" rx="7.9" ry="1.1" fill="#bbbdc2" opacity="0.43"/><ellipse cx="509.5" cy="246.5" rx="7.5" ry="1.1" fill="#82858b" opacity="0.74"/><ellipse cx="509.2" cy="215.1" rx="8.7" ry="2.0" fill="#bbbdc2" opacity="0.40"/><ellipse cx="441.0" cy="223.8" rx="9.1" ry="1.7" fill="#82858b" opacity="0.43"/><ellipse cx="463.9" cy="234.3" rx="7.5" ry="1.4" fill="#82858b" opacity="0.49"/><ellipse cx="419.5" cy="217.4" rx="3.3" ry="1.7" fill="#bbbdc2" opacity="0.55"/><ellipse cx="508.6" cy="222.1" rx="6.2" ry="0.8" fill="#82858b" opacity="0.58"/><ellipse cx="572.9" cy="219.1" rx="7.3" ry="1.8" fill="#bbbdc2" opacity="0.39"/><ellipse cx="435.8" cy="211.1" rx="8.4" ry="0.9" fill="#82858b" opacity="0.52"/><ellipse cx="498.9" cy="233.9" rx="6.9" ry="1.7" fill="#82858b" opacity="0.48"/><ellipse cx="532.3" cy="224.6" rx="8.0" ry="1.9" fill="#82858b" opacity="0.47"/><ellipse cx="537.5" cy="256.5" rx="6.2" ry="1.2" fill="#bbbdc2" opacity="0.73"/><ellipse cx="431.8" cy="206.8" rx="6.3" ry="1.7" fill="#82858b" opacity="0.49"/><ellipse cx="573.3" cy="227.4" rx="8.3" ry="0.9" fill="#bbbdc2" opacity="0.40"/><ellipse cx="419.9" cy="219.9" rx="6.9" ry="1.1" fill="#82858b" opacity="0.50"/><ellipse cx="434.6" cy="212.1" rx="8.2" ry="2.1" fill="#bbbdc2" opacity="0.36"/><ellipse cx="538.4" cy="224.6" rx="9.9" ry="1.5" fill="#82858b" opacity="0.49"/><ellipse cx="542.1" cy="234.6" rx="5.3" ry="2.1" fill="#bbbdc2" opacity="0.64"/><ellipse cx="420.8" cy="224.1" rx="5.8" ry="2.0" fill="#bbbdc2" opacity="0.58"/><ellipse cx="477.6" cy="242.6" rx="9.6" ry="1.7" fill="#bbbdc2" opacity="0.45"/><ellipse cx="453.3" cy="222.2" rx="4.6" ry="1.1" fill="#82858b" opacity="0.61"/><ellipse cx="459.2" cy="241.7" rx="4.5" ry="1.6" fill="#bbbdc2" opacity="0.70"/><ellipse cx="553.4" cy="227.2" rx="8.3" ry="2.0" fill="#bbbdc2" opacity="0.48"/><ellipse cx="490.1" cy="243.9" rx="4.1" ry="1.8" fill="#bbbdc2" opacity="0.53"/><ellipse cx="505.6" cy="246.5" rx="4.5" ry="2.0" fill="#bbbdc2" opacity="0.66"/><ellipse cx="552.5" cy="223.3" rx="9.0" ry="2.2" fill="#bbbdc2" opacity="0.36"/><ellipse cx="428.4" cy="234.9" rx="3.1" ry="2.1" fill="#bbbdc2" opacity="0.64"/><ellipse cx="426.1" cy="211.0" rx="7.8" ry="0.9" fill="#bbbdc2" opacity="0.72"/><ellipse cx="528.2" cy="250.6" rx="9.9" ry="0.8" fill="#bbbdc2" opacity="0.67"/><ellipse cx="523.8" cy="214.5" rx="6.5" ry="1.1" fill="#bbbdc2" opacity="0.39"/><ellipse cx="413.3" cy="232.4" rx="5.2" ry="2.0" fill="#bbbdc2" opacity="0.54"/><ellipse cx="432.4" cy="219.4" rx="4.3" ry="1.8" fill="#bbbdc2" opacity="0.65"/><ellipse cx="492.6" cy="215.0" rx="5.5" ry="1.5" fill="#82858b" opacity="0.49"/><ellipse cx="445.5" cy="238.1" rx="9.2" ry="1.8" fill="#bbbdc2" opacity="0.42"/><ellipse cx="453.7" cy="210.3" rx="3.3" ry="1.5" fill="#bbbdc2" opacity="0.57"/><ellipse cx="469.8" cy="209.6" rx="7.8" ry="1.7" fill="#bbbdc2" opacity="0.57"/><ellipse cx="523.9" cy="254.0" rx="9.1" ry="1.8" fill="#bbbdc2" opacity="0.48"/><ellipse cx="479.2" cy="244.9" rx="5.7" ry="1.3" fill="#bbbdc2" opacity="0.41"/><ellipse cx="574.7" cy="216.8" rx="7.3" ry="2.1" fill="#bbbdc2" opacity="0.59"/><ellipse cx="472.2" cy="217.8" rx="4.4" ry="1.0" fill="#82858b" opacity="0.66"/><ellipse cx="559.9" cy="217.8" rx="7.9" ry="1.3" fill="#82858b" opacity="0.57"/><ellipse cx="462.1" cy="241.5" rx="3.0" ry="1.8" fill="#82858b" opacity="0.55"/><ellipse cx="507.7" cy="251.3" rx="4.6" ry="1.7" fill="#82858b" opacity="0.50"/><ellipse cx="527.5" cy="229.9" rx="6.7" ry="1.7" fill="#82858b" opacity="0.48"/><ellipse cx="513.8" cy="234.3" rx="4.6" ry="1.7" fill="#bbbdc2" opacity="0.71"/><ellipse cx="488.1" cy="237.3" rx="6.7" ry="1.5" fill="#bbbdc2" opacity="0.41"/><ellipse cx="563.0" cy="240.5" rx="6.7" ry="1.5" fill="#82858b" opacity="0.45"/><ellipse cx="438.4" cy="232.2" rx="6.2" ry="1.7" fill="#82858b" opacity="0.71"/><ellipse cx="553.2" cy="217.0" rx="5.7" ry="2.0" fill="#82858b" opacity="0.40"/><ellipse cx="435.4" cy="214.4" rx="3.7" ry="1.3" fill="#82858b" opacity="0.56"/><ellipse cx="484.7" cy="213.5" rx="5.8" ry="2.2" fill="#82858b" opacity="0.53"/><ellipse cx="488.9" cy="240.3" rx="8.3" ry="1.0" fill="#82858b" opacity="0.50"/><ellipse cx="495.9" cy="220.1" rx="5.6" ry="1.3" fill="#bbbdc2" opacity="0.36"/><ellipse cx="443.1" cy="225.2" rx="3.4" ry="1.0" fill="#82858b" opacity="0.46"/><ellipse cx="463.5" cy="217.0" rx="8.8" ry="0.9" fill="#82858b" opacity="0.69"/><ellipse cx="443.3" cy="220.6" rx="8.5" ry="1.7" fill="#bbbdc2" opacity="0.37"/><ellipse cx="483.0" cy="223.5" rx="8.0" ry="1.2" fill="#bbbdc2" opacity="0.61"/><ellipse cx="543.8" cy="230.0" rx="5.7" ry="1.6" fill="#82858b" opacity="0.43"/><ellipse cx="570.3" cy="250.3" rx="5.6" ry="1.7" fill="#bbbdc2" opacity="0.38"/><ellipse cx="534.7" cy="230.1" rx="6.7" ry="1.5" fill="#82858b" opacity="0.65"/><ellipse cx="414.2" cy="221.6" rx="6.2" ry="1.4" fill="#82858b" opacity="0.52"/><ellipse cx="488.1" cy="243.6" rx="6.1" ry="1.5" fill="#bbbdc2" opacity="0.68"/><ellipse cx="520.6" cy="243.4" rx="5.8" ry="0.9" fill="#82858b" opacity="0.57"/><ellipse cx="536.9" cy="247.4" rx="3.8" ry="1.1" fill="#bbbdc2" opacity="0.68"/><ellipse cx="426.8" cy="208.7" rx="8.3" ry="1.6" fill="#bbbdc2" opacity="0.62"/><ellipse cx="527.3" cy="233.6" rx="3.4" ry="1.8" fill="#bbbdc2" opacity="0.58"/><ellipse cx="574.7" cy="256.1" rx="9.1" ry="1.0" fill="#bbbdc2" opacity="0.56"/><ellipse cx="411.0" cy="231.9" rx="4.9" ry="1.2" fill="#bbbdc2" opacity="0.45"/><ellipse cx="551.7" cy="240.2" rx="6.6" ry="1.4" fill="#bbbdc2" opacity="0.47"/><ellipse cx="553.0" cy="251.6" rx="9.0" ry="1.2" fill="#bbbdc2" opacity="0.37"/><ellipse cx="498.6" cy="225.6" rx="6.2" ry="1.5" fill="#bbbdc2" opacity="0.50"/><ellipse cx="542.2" cy="223.1" rx="9.4" ry="1.6" fill="#bbbdc2" opacity="0.48"/><ellipse cx="498.0" cy="226.9" rx="7.0" ry="1.3" fill="#bbbdc2" opacity="0.67"/><ellipse cx="458.1" cy="232.0" rx="8.6" ry="1.6" fill="#bbbdc2" opacity="0.72"/><ellipse cx="483.4" cy="242.2" rx="3.4" ry="1.4" fill="#82858b" opacity="0.37"/><ellipse cx="552.3" cy="218.2" rx="7.2" ry="1.1" fill="#82858b" opacity="0.57"/><ellipse cx="542.1" cy="236.3" rx="7.7" ry="1.7" fill="#bbbdc2" opacity="0.43"/><ellipse cx="548.3" cy="221.2" rx="9.4" ry="1.1" fill="#bbbdc2" opacity="0.39"/><ellipse cx="539.4" cy="255.7" rx="5.9" ry="1.7" fill="#bbbdc2" opacity="0.71"/><ellipse cx="523.2" cy="219.4" rx="3.4" ry="1.8" fill="#bbbdc2" opacity="0.68"/><ellipse cx="458.4" cy="216.1" rx="7.1" ry="1.2" fill="#bbbdc2" opacity="0.41"/><ellipse cx="560.5" cy="230.6" rx="8.9" ry="1.0" fill="#82858b" opacity="0.74"/><ellipse cx="474.6" cy="210.7" rx="5.7" ry="1.7" fill="#bbbdc2" opacity="0.57"/><ellipse cx="425.4" cy="219.6" rx="8.1" ry="1.4" fill="#82858b" opacity="0.40"/><ellipse cx="546.7" cy="220.0" rx="9.5" ry="2.2" fill="#82858b" opacity="0.56"/><ellipse cx="458.0" cy="219.9" rx="8.3" ry="1.5" fill="#82858b" opacity="0.39"/><ellipse cx="490.0" cy="242.9" rx="7.2" ry="1.6" fill="#bbbdc2" opacity="0.41"/><ellipse cx="454.7" cy="237.4" rx="8.9" ry="1.1" fill="#82858b" opacity="0.36"/><ellipse cx="508.8" cy="250.5" rx="5.4" ry="2.1" fill="#82858b" opacity="0.37"/><ellipse cx="465.0" cy="224.2" rx="4.7" ry="1.8" fill="#bbbdc2" opacity="0.67"/><ellipse cx="459.2" cy="210.8" rx="6.9" ry="0.9" fill="#bbbdc2" opacity="0.67"/><ellipse cx="508.3" cy="230.2" rx="3.2" ry="1.5" fill="#bbbdc2" opacity="0.61"/><ellipse cx="431.8" cy="223.8" rx="5.5" ry="1.3" fill="#82858b" opacity="0.42"/><ellipse cx="438.0" cy="235.8" rx="5.3" ry="2.0" fill="#82858b" opacity="0.54"/><ellipse cx="434.6" cy="209.6" rx="9.2" ry="1.0" fill="#bbbdc2" opacity="0.56"/><ellipse cx="429.4" cy="220.2" rx="4.1" ry="1.5" fill="#bbbdc2" opacity="0.50"/><ellipse cx="442.6" cy="219.9" rx="4.4" ry="1.0" fill="#bbbdc2" opacity="0.70"/><ellipse cx="492.8" cy="244.4" rx="3.1" ry="2.1" fill="#bbbdc2" opacity="0.67"/><ellipse cx="504.1" cy="238.6" rx="4.6" ry="1.9" fill="#bbbdc2" opacity="0.46"/><ellipse cx="415.1" cy="216.2" rx="6.6" ry="1.2" fill="#82858b" opacity="0.38"/><ellipse cx="505.5" cy="220.9" rx="7.2" ry="1.9" fill="#82858b" opacity="0.37"/><ellipse cx="450.5" cy="227.2" rx="9.9" ry="0.9" fill="#82858b" opacity="0.63"/><ellipse cx="544.4" cy="229.6" rx="8.7" ry="1.4" fill="#82858b" opacity="0.35"/><ellipse cx="565.2" cy="235.3" rx="5.8" ry="0.9" fill="#bbbdc2" opacity="0.64"/><ellipse cx="522.0" cy="219.1" rx="5.4" ry="1.0" fill="#bbbdc2" opacity="0.44"/><ellipse cx="464.6" cy="242.1" rx="10.0" ry="1.9" fill="#bbbdc2" opacity="0.55"/><ellipse cx="538.6" cy="253.7" rx="8.3" ry="1.7" fill="#bbbdc2" opacity="0.60"/><ellipse cx="549.5" cy="250.3" rx="3.6" ry="1.8" fill="#bbbdc2" opacity="0.41"/><ellipse cx="569.3" cy="248.3" rx="8.2" ry="1.0" fill="#82858b" opacity="0.72"/><ellipse cx="559.3" cy="250.0" rx="8.8" ry="1.9" fill="#bbbdc2" opacity="0.52"/><ellipse cx="546.2" cy="249.6" rx="9.1" ry="1.2" fill="#82858b" opacity="0.56"/><ellipse cx="566.1" cy="221.4" rx="9.8" ry="1.9" fill="#bbbdc2" opacity="0.69"/><ellipse cx="448.3" cy="214.0" rx="6.2" ry="1.1" fill="#bbbdc2" opacity="0.71"/><ellipse cx="523.1" cy="242.5" rx="5.7" ry="1.9" fill="#82858b" opacity="0.62"/><ellipse cx="565.4" cy="254.9" rx="5.8" ry="0.9" fill="#82858b" opacity="0.68"/><ellipse cx="466.0" cy="229.3" rx="8.9" ry="1.9" fill="#bbbdc2" opacity="0.55"/><ellipse cx="412.7" cy="208.2" rx="8.7" ry="1.4" fill="#82858b" opacity="0.53"/><ellipse cx="465.3" cy="216.2" rx="5.5" ry="2.0" fill="#82858b" opacity="0.47"/><ellipse cx="424.5" cy="213.8" rx="7.9" ry="1.4" fill="#82858b" opacity="0.67"/><ellipse cx="429.9" cy="226.6" rx="3.3" ry="2.0" fill="#bbbdc2" opacity="0.46"/><ellipse cx="568.0" cy="233.3" rx="4.6" ry="2.0" fill="#82858b" opacity="0.71"/><ellipse cx="475.1" cy="227.3" rx="9.7" ry="1.5" fill="#82858b" opacity="0.43"/><ellipse cx="547.1" cy="221.9" rx="6.7" ry="0.8" fill="#bbbdc2" opacity="0.73"/><ellipse cx="485.0" cy="240.0" rx="4.8" ry="1.3" fill="#bbbdc2" opacity="0.57"/><ellipse cx="552.3" cy="238.3" rx="5.6" ry="2.1" fill="#82858b" opacity="0.62"/><ellipse cx="422.5" cy="223.7" rx="6.1" ry="2.1" fill="#bbbdc2" opacity="0.61"/><ellipse cx="514.3" cy="227.5" rx="6.7" ry="1.7" fill="#82858b" opacity="0.55"/><ellipse cx="470.0" cy="243.2" rx="3.4" ry="2.0" fill="#82858b" opacity="0.57"/><ellipse cx="483.9" cy="237.7" rx="9.2" ry="1.8" fill="#82858b" opacity="0.36"/><ellipse cx="463.7" cy="213.4" rx="9.7" ry="2.0" fill="#bbbdc2" opacity="0.59"/><ellipse cx="505.2" cy="213.5" rx="5.7" ry="1.8" fill="#82858b" opacity="0.46"/><ellipse cx="535.8" cy="226.4" rx="6.8" ry="1.4" fill="#82858b" opacity="0.61"/><ellipse cx="542.8" cy="244.2" rx="5.7" ry="2.1" fill="#82858b" opacity="0.63"/><ellipse cx="455.8" cy="213.5" rx="7.0" ry="2.0" fill="#82858b" opacity="0.49"/><ellipse cx="433.1" cy="222.1" rx="9.1" ry="1.0" fill="#82858b" opacity="0.42"/><ellipse cx="461.5" cy="210.4" rx="5.1" ry="1.3" fill="#82858b" opacity="0.73"/><ellipse cx="440.9" cy="216.8" rx="9.6" ry="1.1" fill="#bbbdc2" opacity="0.53"/><ellipse cx="427.9" cy="213.9" rx="5.8" ry="1.3" fill="#82858b" opacity="0.46"/><ellipse cx="443.7" cy="235.9" rx="6.2" ry="2.0" fill="#82858b" opacity="0.66"/><ellipse cx="461.9" cy="213.8" rx="8.3" ry="1.5" fill="#bbbdc2" opacity="0.62"/><ellipse cx="534.2" cy="225.6" rx="5.5" ry="2.1" fill="#bbbdc2" opacity="0.47"/><ellipse cx="514.0" cy="222.8" rx="8.4" ry="0.9" fill="#82858b" opacity="0.58"/><ellipse cx="468.4" cy="241.6" rx="4.9" ry="1.1" fill="#bbbdc2" opacity="0.57"/><ellipse cx="534.4" cy="243.0" rx="5.9" ry="1.9" fill="#bbbdc2" opacity="0.47"/><ellipse cx="516.4" cy="251.9" rx="7.4" ry="1.8" fill="#82858b" opacity="0.51"/><ellipse cx="565.2" cy="250.9" rx="5.4" ry="1.3" fill="#82858b" opacity="0.49"/><ellipse cx="440.6" cy="234.2" rx="6.7" ry="1.5" fill="#82858b" opacity="0.71"/><ellipse cx="432.0" cy="216.7" rx="3.5" ry="1.4" fill="#bbbdc2" opacity="0.69"/><ellipse cx="520.2" cy="236.6" rx="5.8" ry="1.6" fill="#bbbdc2" opacity="0.69"/><ellipse cx="540.1" cy="250.9" rx="4.1" ry="1.7" fill="#82858b" opacity="0.55"/><ellipse cx="558.2" cy="257.0" rx="8.2" ry="1.9" fill="#82858b" opacity="0.70"/><ellipse cx="431.7" cy="227.5" rx="7.9" ry="1.7" fill="#bbbdc2" opacity="0.38"/><ellipse cx="509.6" cy="244.9" rx="4.9" ry="1.1" fill="#bbbdc2" opacity="0.39"/><ellipse cx="521.5" cy="253.3" rx="8.6" ry="1.3" fill="#82858b" opacity="0.38"/><ellipse cx="548.4" cy="229.3" rx="3.0" ry="1.7" fill="#bbbdc2" opacity="0.46"/><ellipse cx="419.8" cy="218.3" rx="6.9" ry="1.9" fill="#bbbdc2" opacity="0.68"/><ellipse cx="428.2" cy="212.9" rx="7.4" ry="1.3" fill="#bbbdc2" opacity="0.58"/><ellipse cx="445.9" cy="232.6" rx="4.5" ry="2.0" fill="#82858b" opacity="0.56"/><ellipse cx="415.0" cy="226.9" rx="3.2" ry="1.5" fill="#bbbdc2" opacity="0.38"/></g>
 
 </g>
</svg>
<!-- preview controls -->
<div class="a" style="left:633px;top:338px;width:634px;height:31px;background:#1a1f26"></div>
<div class="a" style="left:665px;top:345px;width:510px;height:1px;background:#3b4047"></div>
<span class="t" style="left:1183px;top:341px;font-size:8px;color:#c9cdd2">{</span>
<span class="t" style="left:1199px;top:341px;font-size:8px;color:#c9cdd2">}</span>
<div class="a" style="left:1216px;top:340px;width:42px;height:11px;background:#151a20;border-radius:2px"></div>
<span class="t" style="left:1220px;top:343px;font-size:6.3px;color:#c9cdd2">00:00:01:46</span>
<div class="a" style="left:1117px;top:356px;width:43px;height:11px;background:#151a20;border-radius:2px"></div>
<span class="t" style="left:1121px;top:358.5px;font-size:6.5px;color:#a9aeb5"><span class="z">完整质量</span></span>
<svg class="a" style="left:1150px;top:359px" width="5" height="4" viewBox="0 0 5 4"><path d="M.5 1l2 2 2-2" fill="none" stroke="#a9aeb5" stroke-width=".7"/></svg>
<svg class="a" style="left:1165px;top:355px" width="100" height="12" viewBox="0 0 100 12" fill="none" stroke="#c9cdd2" stroke-width=".8">
 <rect x="4" y="2.5" width="8" height="6"/><path d="M10 8l1.5 2 1.5-2"/>
 <rect x="24.5" y="3" width="8" height="6"/><circle cx="28.5" cy="6" r="1.8"/><path d="M26.5 3l1-1h2l1 1"/>
 <path d="M44 4h1.5l2.5-2v8l-2.5-2H44Z M50 3.5q1.5 2.5 0 5"/>
 <path d="M64 3v6h9V6h-5V3Z"/>
 <path d="M84 3l2.5 2.5M84 3v1.8M84 3h1.8 M91 9l-2.5-2.5M91 9V7.2M91 9H89.2"/>
</svg>
<div class="a" style="left:633px;top:368px;width:634px;height:1px;background:#0f1317"></div>
<!-- timeline toolbar -->
<div class="a" id="tltool" style="left:0;top:369px;width:1267px;height:21px;background:#1e232a"></div>
<div class="a" style="left:0;top:368.5px;width:633px;height:1px;background:#12161b"></div>
<svg class="a" style="left:0;top:372px" width="390" height="16" viewBox="0 0 390 16" fill="none" stroke="#c9cdd2" stroke-width=".85">
 <rect x="6.5" y="4.5" width="3" height="3"/><rect x="10.5" y="4.5" width="3" height="3"/><rect x="6.5" y="8.5" width="3" height="3"/><rect x="10.5" y="8.5" width="3" height="3"/>
 <path d="M24 4.5v7" stroke="#5b6168"/>
 <path d="M35 6h4.5a2.5 2.5 0 0 1 0 5H36M35 6l2-2M35 6l2 2"/>
 <path d="M61 6h-4.5a2.5 2.5 0 0 0 0 5H60M61 6l-2-2M61 6l-2 2" stroke="#5b6168"/>
 <path d="M74 5h6M75 5v6.5h4V5M76.2 4v-1h1.6v1M76.3 6.5v3.5M77.7 6.5v3.5"/>
 <path d="M95 3.5l4.5 6M99 3.5l-4.5 6"/><circle cx="94.5" cy="10.8" r="1.3"/><circle cx="99.5" cy="10.8" r="1.3"/>
 <path d="M114 9l4-4.5a1.5 1.5 0 0 1 2 2l-4 4.5a1.5 1.5 0 0 1-2-2Z"/>
 <path d="M134 5h6v6M136 3v6h6M134 11h2M140 3v2"/>
 <path d="M153 4h7M156.5 4v7.5M155.5 11.5h2M159.5 9h3M161 7.5v3"/>
 <path d="M173.5 6.5v3M175.5 4.5v7M177.5 3v10M179.5 4.5v7M181.5 6.5v3" stroke-width=".7"/>
 <circle cx="196" cy="8" r="3.2"/><path d="M194.8 6.5l2 1.5-2 1.5Z"/>
 <circle cx="216" cy="8" r="3.2" stroke="#5b6168"/>
 <circle cx="235" cy="8.5" r="2.5"/><path d="M232 5l1.5 1"/>
 <circle cx="255.5" cy="8" r="3.5"/><path d="M255.5 6v2l1.5 1"/>
 <circle cx="275.5" cy="8" r="3.5"/><circle cx="274.5" cy="7" r=".5"/><circle cx="276.5" cy="7" r=".5"/>
 <path d="M292 4h7v4.5h-7ZM295.5 8.5v3M293.5 11.5h4"/>
 <circle cx="315" cy="8.5" r="3.2"/><path d="M315 7v1.5M314 4h2"/>
 <path d="M331.5 5v-1.5h2M336.5 3.5h2V5M338.5 10v1.5h-2M333.5 11.5h-2V10M335 6v4M333 8h4"/>
 <path d="M351 5h7M351 8h7M351 11h7M353 4v2M356 7v2M353 10v2"/>
 <path d="M370 5h8v6h-8ZM368 8h2M378 8h2"/>
</svg>
<svg class="a" style="left:1038px;top:372px" width="229" height="16" viewBox="0 0 229 16" fill="none" stroke="#c9cdd2" stroke-width=".85">
 <circle cx="10.3" cy="8" r="3.5"/><path d="M9.3 6.3l2.5 1.7-2.5 1.7Z"/>
 <path d="M27.5 4h4.5v6l-2.25 1.8L27.5 10Z"/>
 <rect x="48.5" y="3.5" width="3" height="5" rx="1.5"/><path d="M47 7.5a3 3 0 0 0 6 0M50 10.5v2"/>
 <path d="M66 5h5M66 7h4M66 9h3M72.5 4v6"/><circle cx="71.5" cy="10.5" r="1" fill="#c9cdd2"/>
 <g stroke="#4fd6b4"><rect x="85" y="5.5" width="9" height="5"/><path d="M89.5 3v10M86 3.5l1 1M93 3.5l-1 1M86 12.5l1-1M93 12.5l-1-1"/></g>
 <rect x="104.5" y="4.5" width="9" height="7"/><path d="M106.5 8h5M106.5 8l1-1M106.5 8l1 1M111.5 8l-1-1M111.5 8l-1 1"/>
 <circle cx="129.5" cy="8" r="3.5"/><path d="M127.5 8h4"/>
 <path d="M140 8h14" stroke="#c9cdd2" stroke-width="1"/><path d="M154 8h25" stroke="#4a4f56"/>
 <circle cx="154" cy="8" r="1.6" fill="#dfe2e5" stroke="none"/>
 <circle cx="190" cy="8" r="3.5"/><path d="M188 8h4M190 6v4"/>
</svg>
<div class="a" style="left:1244px;top:373px;width:6px;height:14px;background:#0a0c0f"></div>
<div class="a" style="left:1251px;top:373px;width:7px;height:14px;background:#0a0c0f"></div>
<div class="a" id="ruler" style="left:0;top:390px;width:1267px;height:16px;background:#1a1f27"></div>
<svg class="a" style="left:0;top:390px" width="63" height="16" viewBox="0 0 63 16" fill="none" stroke="#c9cdd2" stroke-width=".8">
 <rect x="14.5" y="5.5" width="5" height="5"/><path d="M13 4h4.5M13 4v5M17 7h2M18 6v2" /><path d="M42 9.5l3-3M41.5 8.5l-1 1a1.2 1.2 0 0 0 1.7 1.7l1-1M45.5 7.5l1-1a1.2 1.2 0 0 0-1.7-1.7l-1 1"/>
</svg>
<svg class="a" style="left:0;top:390px" width="1267" height="16" viewBox="0 0 1267 16" fill="none" stroke="#8d9197" stroke-width=".7">
 <path d="M63.5 10v5 M73.5 12.5v2.5 M83.4 12.5v2.5 M93.3 12.5v2.5 M103.3 12.5v2.5 M113.2 10v5 M123.2 12.5v2.5 M133.2 12.5v2.5 M143.1 12.5v2.5 M153.1 12.5v2.5 M163.0 10v5 M172.9 12.5v2.5 M182.9 12.5v2.5 M192.8 12.5v2.5 M202.8 12.5v2.5 M212.8 10v5 M222.7 12.5v2.5 M232.7 12.5v2.5 M242.6 12.5v2.5 M252.6 12.5v2.5 M262.5 10v5 M272.4 12.5v2.5 M282.4 12.5v2.5 M292.4 12.5v2.5 M302.3 12.5v2.5 M312.2 10v5 M322.2 12.5v2.5 M332.1 12.5v2.5 M342.1 12.5v2.5 M352.1 12.5v2.5 M362.0 10v5 M371.9 12.5v2.5 M381.9 12.5v2.5 M391.9 12.5v2.5 M401.8 12.5v2.5 M411.8 10v5 M421.7 12.5v2.5 M431.6 12.5v2.5 M441.6 12.5v2.5 M451.6 12.5v2.5 M461.5 10v5 M471.4 12.5v2.5 M481.4 12.5v2.5 M491.4 12.5v2.5 M501.3 12.5v2.5 M511.2 10v5 M521.2 12.5v2.5 M531.1 12.5v2.5 M541.1 12.5v2.5 M551.0 12.5v2.5 M561.0 10v5 M571.0 12.5v2.5 M580.9 12.5v2.5 M590.9 12.5v2.5 M600.8 12.5v2.5 M610.8 10v5 M620.7 12.5v2.5 M630.6 12.5v2.5 M640.6 12.5v2.5 M650.5 12.5v2.5 M660.5 10v5 M670.5 12.5v2.5 M680.4 12.5v2.5 M690.4 12.5v2.5 M700.3 12.5v2.5 M710.2 10v5 M720.2 12.5v2.5 M730.1 12.5v2.5 M740.1 12.5v2.5 M750.0 12.5v2.5 M760.0 10v5 M770.0 12.5v2.5 M779.9 12.5v2.5 M789.9 12.5v2.5 M799.8 12.5v2.5 M809.8 10v5 M819.7 12.5v2.5 M829.6 12.5v2.5 M839.6 12.5v2.5 M849.5 12.5v2.5 M859.5 10v5 M869.5 12.5v2.5 M879.4 12.5v2.5 M889.4 12.5v2.5 M899.3 12.5v2.5 M909.2 10v5 M919.2 12.5v2.5 M929.1 12.5v2.5 M939.1 12.5v2.5 M949.0 12.5v2.5 M959.0 10v5 M969.0 12.5v2.5 M978.9 12.5v2.5 M988.9 12.5v2.5 M998.8 12.5v2.5 M1008.8 10v5 M1018.7 12.5v2.5 M1028.7 12.5v2.5 M1038.6 12.5v2.5 M1048.5 12.5v2.5 M1058.5 10v5 M1068.5 12.5v2.5 M1078.4 12.5v2.5 M1088.3 12.5v2.5 M1098.3 12.5v2.5 M1108.2 10v5 M1118.2 12.5v2.5 M1128.2 12.5v2.5 M1138.1 12.5v2.5 M1148.0 12.5v2.5 M1158.0 10v5 M1168.0 12.5v2.5 M1177.9 12.5v2.5 M1187.8 12.5v2.5 M1197.8 12.5v2.5 M1207.8 10v5 M1217.7 12.5v2.5 M1227.7 12.5v2.5 M1237.6 12.5v2.5 M1247.5 12.5v2.5 M1257.5 10v5"/>
</svg>
<span class="t" style="left:64.0px;top:395.5px;font-size:6px;color:#b9bdc3">:00:00</span>
<span class="t" style="left:97.2px;top:395.5px;font-size:6px;color:#b9bdc3">00:00:05:00</span>
<span class="t" style="left:147.0px;top:395.5px;font-size:6px;color:#b9bdc3">00:00:10:00</span>
<span class="t" style="left:196.8px;top:395.5px;font-size:6px;color:#b9bdc3">00:00:15:00</span>
<span class="t" style="left:246.5px;top:395.5px;font-size:6px;color:#b9bdc3">00:00:20:00</span>
<span class="t" style="left:296.2px;top:395.5px;font-size:6px;color:#b9bdc3">00:00:25:00</span>
<span class="t" style="left:346.0px;top:395.5px;font-size:6px;color:#b9bdc3">00:00:30:00</span>
<span class="t" style="left:395.8px;top:395.5px;font-size:6px;color:#b9bdc3">00:00:35:00</span>
<span class="t" style="left:445.5px;top:395.5px;font-size:6px;color:#b9bdc3">00:00:40:00</span>
<span class="t" style="left:495.2px;top:395.5px;font-size:6px;color:#b9bdc3">00:00:45:00</span>
<span class="t" style="left:545.0px;top:395.5px;font-size:6px;color:#b9bdc3">00:00:50:00</span>
<span class="t" style="left:594.8px;top:395.5px;font-size:6px;color:#b9bdc3">00:00:55:00</span>
<span class="t" style="left:644.5px;top:395.5px;font-size:6px;color:#b9bdc3">00:01:00:00</span>
<span class="t" style="left:694.2px;top:395.5px;font-size:6px;color:#b9bdc3">00:01:05:00</span>
<span class="t" style="left:744.0px;top:395.5px;font-size:6px;color:#b9bdc3">00:01:10:00</span>
<span class="t" style="left:793.8px;top:395.5px;font-size:6px;color:#b9bdc3">00:01:15:00</span>
<span class="t" style="left:843.5px;top:395.5px;font-size:6px;color:#b9bdc3">00:01:20:00</span>
<span class="t" style="left:893.2px;top:395.5px;font-size:6px;color:#b9bdc3">00:01:25:00</span>
<span class="t" style="left:943.0px;top:395.5px;font-size:6px;color:#b9bdc3">00:01:30:00</span>
<span class="t" style="left:992.8px;top:395.5px;font-size:6px;color:#b9bdc3">00:01:35:00</span>
<span class="t" style="left:1042.5px;top:395.5px;font-size:6px;color:#b9bdc3">00:01:40:00</span>
<span class="t" style="left:1092.2px;top:395.5px;font-size:6px;color:#b9bdc3">00:01:45:00</span>
<span class="t" style="left:1142.0px;top:395.5px;font-size:6px;color:#b9bdc3">00:01:50:00</span>
<span class="t" style="left:1191.8px;top:395.5px;font-size:6px;color:#b9bdc3">00:01:55:00</span>
<span class="t" style="left:1241.5px;top:395.5px;font-size:6px;color:#b9bdc3">00:02:00:00</span>
<span class="t" style="left:1291.2px;top:395.5px;font-size:6px;color:#b9bdc3">00:02:05:00</span>
<div class="a" style="left:63px;top:405px;width:182px;height:1.2px;background:#e9534a"></div>
<!-- tracks -->
<div class="a" style="left:0;top:406px;width:1267px;height:125px;background:#141921"></div>
<div class="a" style="left:0;top:531px;width:1267px;height:34px;background:#191e26"></div>
<div class="a" style="left:0;top:565px;width:1267px;height:35px;background:#222831"></div>
<div class="a" style="left:0;top:600px;width:1267px;height:22px;background:#191e26"></div>
<div class="a" style="left:0;top:622px;width:1267px;height:34px;background:#222831"></div>
<div class="a" style="left:0;top:656px;width:1267px;height:28px;background:#141921"></div>
<div class="a" style="left:0;top:406px;width:63px;height:278px;background:rgba(255,255,255,.018)"></div>
<svg class="a" style="left:0;top:575px" width="63" height="44" viewBox="0 0 63 44" fill="none" stroke="#c9cdd2" stroke-width=".8">
 <rect x="5" y="3.5" width="6" height="6" fill="#c9cdd2" stroke="none"/><path d="M7 4.8v3.4l2.6-1.7Z" fill="#222831" stroke="none"/>
 <path d="M13 4v5" stroke="#8d9197"/>
 <rect x="21.5" y="6" width="5" height="3.5"/><path d="M22.5 6V4.5a1.5 1.5 0 0 1 3-.3"/>
 <path d="M37 5.5h1.3l2-1.5v5l-2-1.5H37Z M42 5q.8 1.5 0 3"/>
 <path d="M52 6.5q3-3 6 0q-3 3-6 0Z"/><circle cx="55" cy="6.5" r=".9" fill="#c9cdd2"/>
 <path d="M6 40v-5l4-1v5M6 36l4-1"/><circle cx="5.5" cy="40" r=".9" fill="#c9cdd2"/><circle cx="9.5" cy="39" r=".9" fill="#c9cdd2"/>
 <path d="M13 34v5" stroke="#8d9197"/>
 <rect x="21.5" y="35" width="5" height="3.5"/><path d="M22.5 35V33.5a1.5 1.5 0 0 1 3-.3"/>
 <path d="M37 34.5h1.3l2-1.5v5l-2-1.5H37Z"/>
</svg>
<!-- clip -->
<div class="a" id="clip" style="left:63.5px;top:565px;width:181.5px;height:35px;background:#4f57a8;border:1.2px solid #efd27a;overflow:hidden">
 <svg class="a" style="left:0px;top:0" width="35" height="19.5"><use href="#beach"/></svg><svg class="a" style="left:35px;top:0" width="35" height="19.5"><use href="#beach"/></svg><svg class="a" style="left:70px;top:0" width="35" height="19.5"><use href="#beach"/></svg><svg class="a" style="left:105px;top:0" width="35" height="19.5"><use href="#beach"/></svg><svg class="a" style="left:140px;top:0" width="35" height="19.5"><use href="#beach"/></svg><svg class="a" style="left:175px;top:0" width="35" height="19.5"><use href="#beach"/></svg>
 <div class="a" style="left:0;top:19.5px;width:180px;height:1px;background:#2e3440"></div><div class="a" style="left:0;top:20.5px;width:180px;height:3.5px;background:#5a62b8"></div>
 <div class="a" style="left:0;top:24px;width:180px;height:1.2px;background:#8f96dc"></div>
 <svg class="a" style="left:0;top:26px" width="180" height="8" viewBox="0 0 180 8"><path d="M0 8 L0.0 7.3 L1.2 7.0 L2.4 7.2 L3.6 6.9 L4.8 6.9 L6.0 7.5 L7.2 6.5 L8.4 3.6 L9.6 5.6 L10.8 5.7 L12.0 3.0 L13.2 4.9 L14.4 3.6 L15.6 4.8 L16.8 4.3 L18.0 6.0 L19.2 4.3 L20.4 3.5 L21.6 4.7 L22.8 3.9 L24.0 6.8 L25.2 7.5 L26.4 6.8 L27.6 6.9 L28.8 7.2 L30.0 7.0 L31.2 5.3 L32.4 6.1 L33.6 5.6 L34.8 5.3 L36.0 5.6 L37.2 5.2 L38.4 6.3 L39.6 5.4 L40.8 6.2 L42.0 6.6 L43.2 6.6 L44.4 7.4 L45.6 7.4 L46.8 7.3 L48.0 6.5 L49.2 7.1 L50.4 6.9 L51.6 7.2 L52.8 4.7 L54.0 5.1 L55.2 5.3 L56.4 4.5 L57.6 4.5 L58.8 3.3 L60.0 4.1 L61.2 3.2 L62.4 3.5 L63.6 3.0 L64.8 4.2 L66.0 5.9 L67.2 3.5 L68.4 6.5 L69.6 6.6 L70.8 7.0 L72.0 6.8 L73.2 7.3 L74.4 6.7 L75.6 6.9 L76.8 7.3 L78.0 7.5 L79.2 5.3 L80.4 5.0 L81.6 6.9 L82.8 5.4 L84.0 6.2 L85.2 6.8 L86.4 6.5 L87.6 5.5 L88.8 5.3 L90.0 7.0 L91.2 6.9 L92.4 7.5 L93.6 6.8 L94.8 7.2 L96.0 6.6 L97.2 6.5 L98.4 7.0 L99.6 6.5 L100.8 7.2 L102.0 6.2 L103.2 4.4 L104.4 6.4 L105.6 5.8 L106.8 5.1 L108.0 4.4 L109.2 6.0 L110.4 6.4 L111.6 3.5 L112.8 5.4 L114.0 3.1 L115.2 3.4 L116.4 5.2 L117.6 4.9 L118.8 7.0 L120.0 6.9 L121.2 6.9 L122.4 7.0 L123.6 6.9 L124.8 5.1 L126.0 6.0 L127.2 6.2 L128.4 5.6 L129.6 6.6 L130.8 6.5 L132.0 5.0 L133.2 6.0 L134.4 5.9 L135.6 7.1 L136.8 7.1 L138.0 6.9 L139.2 7.5 L140.4 6.9 L141.6 6.9 L142.8 6.3 L144.0 4.3 L145.2 4.9 L146.4 4.1 L147.6 5.3 L148.8 4.0 L150.0 3.9 L151.2 6.4 L152.4 6.3 L153.6 4.1 L154.8 3.1 L156.0 5.6 L157.2 4.9 L158.4 6.9 L159.6 7.2 L160.8 7.2 L162.0 7.2 L163.2 7.2 L164.4 4.4 L165.6 5.4 L166.8 5.2 L168.0 3.8 L169.2 6.4 L170.4 4.5 L171.6 3.9 L172.8 5.4 L174.0 5.7 L175.2 3.7 L176.4 5.7 L177.6 5.8 L178.8 5.0 L180.0 4.1 L180 8Z" fill="#7b83d6"/></svg>
 <div class="a" style="left:3px;top:2px;width:7px;height:7px;background:#f2f2f2"></div>
 <svg class="a" style="left:3px;top:2px" width="7" height="7" viewBox="0 0 7 7"><path d="M2.3 1.5v4l3-2Z" fill="#222"/></svg>
 <span class="t" style="left:12px;top:2.5px;font-size:6.5px;color:#eceef0">mediastorm-free-a7s-018</span>
</div>
<!-- playhead -->
<div class="a" style="left:80px;top:390px;width:1.3px;height:294px;background:#e9534a"></div>
<svg class="a" style="left:76px;top:390px" width="10" height="9" viewBox="0 0 10 9"><path d="M.8 0h8.4v5.5L5 8.6.8 5.5Z" fill="#f05b50"/></svg>
<div class="a" style="left:75px;top:407px;width:11.5px;height:16px;background:#f05b50;border-radius:6px"></div>
<svg class="a" style="left:75px;top:407px" width="12" height="16" viewBox="0 0 12 16" fill="none" stroke="#fff" stroke-width=".7"><path d="M3.5 3l4.2 7M8.5 3l-4.2 7"/><circle cx="3.8" cy="11.5" r="1.5"/><circle cx="8.2" cy="11.5" r="1.5"/></svg>
<div class="a" style="left:63px;top:684px;width:1160px;height:5px;background:#808386;border-radius:3px"></div>
<div class="a" style="left:1234px;top:684px;width:28px;height:5px;background:#171c23"></div>
<!-- taskbar -->
<div class="a" id="taskbar" style="left:0;top:689px;width:1267px;height:24px;background:linear-gradient(90deg,#dde6f2,#e3eaf5 40%,#e6ecf6 60%,#dfe8f3)">
 <svg class="a" style="left:8px;top:5px" width="16" height="14" viewBox="0 0 16 14"><path d="M3 11h9a2.5 2.5 0 0 0 .5-5A3.5 3.5 0 0 0 6 5.5 2.8 2.8 0 0 0 3 11Z" fill="#8fb8e8"/><circle cx="12" cy="4.5" r="2" fill="#f08a3c"/><path d="M3.5 11h8.5a2.3 2.3 0 0 0 .3-4.6A3.3 3.3 0 0 0 6.2 6 2.6 2.6 0 0 0 3.5 11Z" fill="#b8d4f4"/></svg>
 <span class="t" style="left:26px;top:5.5px;font-size:5.5px;color:#333">23°C</span>
 <span class="t" style="left:26px;top:12.5px;font-size:5.5px;color:#444"><span class="z">多云</span></span>
 <div class="a" style="left:668px;top:3px;width:19px;height:19px;background:#f3f6fa;border-radius:3px"></div>
 <svg class="a" style="left:555px;top:0" width="160" height="24" viewBox="0 0 160 24">
  <rect x="8" y="7" width="5.3" height="5.3" fill="#1a8ce6"/><rect x="13.8" y="7" width="5.3" height="5.3" fill="#1a8ce6"/><rect x="8" y="12.8" width="5.3" height="5.3" fill="#1a8ce6"/><rect x="13.8" y="12.8" width="5.3" height="5.3" fill="#1a8ce6"/>
  <path d="M30 8.5h4l1 1h6v8h-11Z" fill="#f5bf3a"/><rect x="32" y="13.5" width="7" height="3.5" fill="#1f8de0"/>
  <circle cx="57" cy="12.5" r="5.6" fill="#1d8ed8"/><path d="M52 13.5a5 5 0 0 1 10-2c-1 2-3 2.5-5 2.5a3 3 0 0 0 4 2.5 5.6 5.6 0 0 1-9-3Z" fill="#46c37a"/><circle cx="58" cy="12.5" r="2" fill="#dfe8f3"/>
  <rect x="73" y="7" width="12" height="12" rx="2.5" fill="#3b82f6"/><path d="M75.5 9.5l4.5 6 3-5-2 .8-1.5-1.5Z" fill="#fff"/>
  <rect x="95" y="8" width="11" height="8.5" rx="1" fill="#c7d6e6" stroke="#9fb4c9" stroke-width=".5"/><path d="M95.5 15l2-3 1.5 1 1.5-3 2 3.5 1.5-1 1.5 2.5Z" fill="#5aa8e8"/>
  <path d="M99 21.5h3" stroke="#7a8088" stroke-width=".8"/>
  <circle cx="122.5" cy="12.5" r="5.8" fill="#777c82"/><circle cx="122.5" cy="12.5" r="4.5" fill="#f4f4f4"/><path d="M122.5 12.5v4M122.5 12.5l-2.5-2.5M122.5 12.5l2.5-2.5" stroke="#222" stroke-width="1"/><path d="M122.5 12.5v3.8" stroke="#e5402f" stroke-width=".9"/>
  <rect x="119" y="20.5" width="8" height="1.2" rx=".6" fill="#1f6fd1"/>
  <path d="M139 8.5a1 1 0 0 1 1-1h10a1 1 0 0 1 1 1v9h-12Z" fill="#1b3446"/><path d="M142 14l6-5" stroke="#4fd6b4" stroke-width="2"/><rect x="138" y="16" width="14" height="2" rx="1" fill="#1b3446"/>
  <path d="M143.5 21.5h3" stroke="#7a8088" stroke-width=".8"/>
 </svg>
 <svg class="a" style="left:1158px;top:5px" width="60" height="14" viewBox="0 0 60 14" fill="none" stroke="#333" stroke-width=".8">
  <path d="M4.5 8.5l2.5-2.5 2.5 2.5"/>
  <path d="M32 4h6.5v6h-6.5ZM33.5 10.5h4M37 4.5l2-1.5" />
  <path d="M44 6h1.3l2-1.5v6l-2-1.5H44ZM49 5.5q1 2 0 4M50.5 4.5q1.7 3 0 6"/>
 </svg>
 <span class="t" style="left:1174px;top:8.5px;font-size:7.5px;color:#333"><span class="z">英</span></span>
 <span class="t" style="right:22px;top:4.5px;font-size:5.5px;color:#333">14:17</span>
 <span class="t" style="right:22px;top:13px;font-size:5.5px;color:#333">2022/9/30</span>
 <div class="a" style="left:1249px;top:8px;width:8.5px;height:8.5px;background:#1475d1;border-radius:50%"></div>
 <span class="t" style="left:1251.7px;top:9.8px;font-size:5px;color:#fff">3</span>
</div>
<!-- export dialog -->
<div class="a" id="dlg" style="left:426px;top:194px;width:240px;height:222px;background:#161b22;border:1px solid #3b4149;border-radius:4px;overflow:hidden">
 <div class="a" style="left:0;top:0;width:240px;height:17px;background:#1f242c"></div>
 <span class="t" style="left:6px;top:5.5px;font-size:6.5px;color:#c9cdd2"><span class="z">万兴喵影</span></span>
 <span class="t" style="left:12px;top:28px;font-size:6.8px;color:#c9cdd2"><span class="z">我的视频</span>.mp4</span>
 <svg class="a" style="left:11.5px;top:40px" width="151" height="85"><use href="#beach"/></svg>
 <div class="a" style="left:11.5px;top:125px;width:151px;height:2.5px;background:#4fd6b4"></div>
 <span class="t" style="left:148px;top:133px;font-size:6.5px;color:#c9cdd2">100%</span>
 <span class="t" style="left:12px;top:145.5px;font-size:6.5px;color:#2fcf7a"><span class="z">导出成功</span></span>
 <svg class="a" style="left:0;top:163.5px" width="187" height="24" viewBox="0 0 187 24">
  <circle cx="21.8" cy="11.8" r="10.3" fill="#fff"/>
  <path d="M21.6 5.8v8.8a2.4 2.4 0 1 1-2.4-2.4" fill="none" stroke="#fe2c55" stroke-width="1.7" transform="translate(.6 .5)"/>
  <path d="M21.6 5.8v8.8a2.4 2.4 0 1 1-2.4-2.4" fill="none" stroke="#25f4ee" stroke-width="1.7" transform="translate(-.5 -.4)"/>
  <path d="M21.6 5.8v8.8a2.4 2.4 0 1 1-2.4-2.4M21.6 5.8q.6 2.6 3.2 2.9" fill="none" stroke="#111" stroke-width="1.5"/>
  <circle cx="50" cy="11.8" r="10.3" fill="#fff"/>
  <path d="M46.5 6.5l7.5 3.8-7.5 3.8Z" fill="#ee3c8c"/><path d="M46.5 10.3l5.5 1-5.5 3Z" fill="#2b9cf8"/>
  <text x="50" y="18.6" font-size="3.6" text-anchor="middle" fill="#ee3c8c" font-family="Liberation Sans" font-weight="bold">YOUKU</text>
  <circle cx="78.3" cy="11.8" r="10.3" fill="#fff"/>
  <path d="M73.5 6l10.5 5.8-10.5 5.8Z" fill="#2fa0f6"/><path d="M73.5 6l3 5.8-3 5.8Z" fill="#ff8a1e"/><path d="M76 8.6l5.2 3.2L76 15Z" fill="#fff"/><path d="M76 8.6l5.2 3.2L76 15Z" fill="#30c45a" opacity=".8" transform="scale(.85) translate(13.5 2)"/>
  <circle cx="106.5" cy="11.8" r="10.3" fill="#2ac21f"/>
  <path d="M99.5 7.5h-.8v8.6h.8M113.5 7.5h.8v8.6h-.8" fill="none" stroke="#fff" stroke-width=".9"/>
  <text x="106.5" y="14.8" font-size="7.2" text-anchor="middle" fill="#fff" font-family="Liberation Sans" font-weight="bold">iQIY</text>
  <circle cx="134.8" cy="11.8" r="10.3" fill="#f27aa6"/>
  <rect x="128.5" y="8.5" width="12.6" height="8" rx="1.3" fill="none" stroke="#fff" stroke-width=".9"/><path d="M130.5 6.3l2 2.2M139 6.3l-2 2.2M131 11.5l1.5 1M138.5 11.5l-1.5 1" stroke="#fff" stroke-width=".9"/>
  <circle cx="163" cy="11.8" r="10.3" fill="#fff"/>
  <circle cx="163.5" cy="11.3" r="5.4" fill="#ee2339"/><path d="M157.5 14.5q1 2.5 4 2.3" stroke="#ee2339" stroke-width="2.2" fill="none"/><path d="M162 9v4.6l3.8-2.3Z" fill="#fff"/>
 </svg>
 <div class="a" style="left:11.5px;top:196.5px;width:81.5px;height:16px;background:#50d9b9;border-radius:8px"></div>
 <span class="t" style="left:36px;top:201.5px;font-size:6.5px;color:#14201d"><span class="z">打开文件夹</span></span>
 <div class="a" style="left:96px;top:196.5px;width:76.5px;height:16px;border:1.2px solid #50d9b9;border-radius:8px"></div>
 <span class="t" style="left:127.5px;top:201.5px;font-size:6.5px;color:#e6e8ea"><span class="z">关闭</span></span>
</div>
<!-- task manager -->
<div class="a" id="tm" style="left:613px;top:99px;width:363px;height:321px;background:#fff;border-radius:5px 5px 5px 5px;overflow:hidden;box-shadow:0 0 0 .5px rgba(0,0,0,.25);color:#1a1a1a">
 <svg class="a" style="left:4px;top:4px" width="8" height="7" viewBox="0 0 8 7"><rect x=".5" y=".5" width="7" height="6" fill="#bcd8ee" stroke="#5e9ed6" stroke-width=".6"/><path d="M1 5.5l1.5-2 1.5 1.5 1.5-2.5 1.5 3Z" fill="#3a8ad0"/></svg>
 <span class="t" style="left:14px;top:4px;font-size:6.5px;color:#8a8a8a"><span class="z">任务管理器</span></span>
 <svg class="a" style="left:301px;top:2px" width="60" height="10" viewBox="0 0 60 10" fill="none" stroke="#999" stroke-width=".7"><path d="M4 5h5"/><rect x="25.5" y="2.5" width="5" height="5"/><path d="M48 2.5l5 5M53 2.5l-5 5"/></svg>
 <span class="t" style="left:3px;top:16.5px;font-size:6px;color:#555"><span class="z">文件</span>(F)</span>
 <span class="t" style="left:29px;top:16.5px;font-size:6px;color:#555"><span class="z">选项</span>(O)</span>
 <span class="t" style="left:57px;top:16.5px;font-size:6px;color:#555"><span class="z">查看</span>(V)</span>
 <div class="a" style="left:0;top:24.5px;width:363px;height:1px;background:#efefef"></div>
 <div class="a" style="left:2px;top:26px;width:361px;height:12px;border-bottom:1px solid #dcdcdc"></div>
 <div class="a" style="left:2px;top:27px;width:16px;height:11px;background:#f0f0f0;border:1px solid #dcdcdc"></div>
 <div class="a" style="left:18px;top:25px;width:19px;height:13px;background:#fff;border:1px solid #dcdcdc;border-bottom:none"></div>
 <div class="a" style="left:37px;top:27px;width:41px;height:11px;background:#f0f0f0;border:1px solid #dcdcdc"></div>
 <div class="a" style="left:77px;top:27px;width:18.5px;height:11px;background:#f0f0f0;border:1px solid #dcdcdc"></div>
 <div class="a" style="left:95px;top:27px;width:18px;height:11px;background:#f0f0f0;border:1px solid #dcdcdc"></div>
 <div class="a" style="left:113px;top:27px;width:29px;height:11px;background:#f0f0f0;border:1px solid #dcdcdc"></div>
 <div class="a" style="left:141px;top:27px;width:19px;height:11px;background:#f0f0f0;border:1px solid #dcdcdc"></div>
 <span class="t" style="left:4px;top:29.5px;font-size:6px;color:#333"><span class="z">进程</span></span>
 <span class="t" style="left:21px;top:28.5px;font-size:6px;color:#333"><span class="z">性能</span></span>
 <span class="t" style="left:39px;top:29.5px;font-size:6px;color:#333"><span class="z">应用历史记录</span></span>
 <span class="t" style="left:80px;top:29.5px;font-size:6px;color:#333"><span class="z">启动</span></span>
 <span class="t" style="left:98px;top:29.5px;font-size:6px;color:#333"><span class="z">用户</span></span>
 <span class="t" style="left:115px;top:29.5px;font-size:6px;color:#333"><span class="z">详细信息</span></span>
 <span class="t" style="left:144px;top:29.5px;font-size:6px;color:#333"><span class="z">服务</span></span>
 <div class="a" style="left:2px;top:241px;width:118px;height:35px;background:#d9d9d9"></div>
 <svg class="a" style="left:0;top:0" width="363" height="300" viewBox="0 0 363 300"><rect x="6.5" y="48.5" width="30" height="19" fill="#fff" stroke="#62a9de" stroke-width="1"/><path d="M7 66 L9 64 L11 63 L12 55 L13 63 L16 64 L20 65 L24 65 L26 62 L27 64 L29 58 L31 57 L34 57 L36 56 L36 67 L7 67Z" stroke="#62a9de" stroke-width=".8" fill="#e6f0f8"/><rect x="6.5" y="77.5" width="30" height="20" fill="#fff" stroke="#c088dc" stroke-width="1"/><path d="M7 96 L20 96 L22 95 L24 96 L36 96" stroke="#c088dc" stroke-width=".8" fill="none"/><rect x="6.5" y="107.5" width="30" height="24" fill="#fff" stroke="#87c966" stroke-width="1"/><path d="M7 131 L8 130 L9 131 L15 131 L16 129 L17 131 L22 131 L23 130 L24 131 L36 131" stroke="#87c966" stroke-width=".8" fill="none"/><rect x="6.5" y="142.5" width="30" height="24" fill="#fff" stroke="#87c966" stroke-width="1"/><path d="M7 166 L36 166" stroke="#87c966" stroke-width=".8" fill="none"/><rect x="6.5" y="176.5" width="30" height="24" fill="#fff" stroke="#87c966" stroke-width="1"/><path d="M7 200 L36 200" stroke="#87c966" stroke-width=".8" fill="none"/><rect x="6.5" y="211.5" width="30" height="24" fill="#fff" stroke="#d49060" stroke-width="1"/><path d="M7 235 L8 233 L9 235 L11 232 L12 235 L14 233 L15 235 L18 234 L19 235 L22 232 L23 235 L25 233 L26 235 L30 233 L31 235 L33 234 L34 235 L36 234" stroke="#d49060" stroke-width=".8" fill="none"/><rect x="6.5" y="246.5" width="30" height="24" fill="#fff" stroke="#62a9de" stroke-width="1"/><path d="M7 270 L10 270 L11 268 L12 270 L22 270 L23 262 L33 262 L34 270 Z" stroke="#62a9de" stroke-width=".8" fill="#e6f0f8"/><rect x="136.5" y="78.5" width="100" height="35" fill="#fff" stroke="#62a9de" stroke-width="1"/><path d="M152.8 79V113M169.7 79V113M186.5 79V113M203.3 79V113M220.2 79V113M137 81.6H236M137 85.2H236M137 88.8H236M137 92.4H236M137 96.0H236M137 99.6H236M137 103.2H236M137 106.8H236M137 110.4H236" stroke="#dfedf8" stroke-width=".6" fill="none"/><path d="M137 113 L150 112.5 L155 112 L165 112.6 L185 112.3 L200 111.5 L236 111.5" stroke="#62a9de" stroke-width=".8" fill="none"/><rect x="240.5" y="78.5" width="100" height="35" fill="#fff" stroke="#62a9de" stroke-width="1"/><path d="M256.8 79V113M273.7 79V113M290.5 79V113M307.3 79V113M324.2 79V113M241 81.6H340M241 85.2H340M241 88.8H340M241 92.4H340M241 96.0H340M241 99.6H340M241 103.2H340M241 106.8H340M241 110.4H340" stroke="#dfedf8" stroke-width=".6" fill="none"/><path d="M241 113 L255 113 L257 110 L260 113 L290 113 L302 113 L306 108 L330 108 L334 113 Z" stroke="#62a9de" stroke-width=".8" fill="#e6f0f8"/><rect x="136.5" y="129.5" width="100" height="35" fill="#fff" stroke="#62a9de" stroke-width="1"/><path d="M152.8 130V164M169.7 130V164M186.5 130V164M203.3 130V164M220.2 130V164M137 132.6H236M137 136.2H236M137 139.8H236M137 143.4H236M137 147.0H236M137 150.6H236M137 154.2H236M137 157.8H236M137 161.4H236" stroke="#dfedf8" stroke-width=".6" fill="none"/><path d="M137 164 L200 164 L202 148 L232 148 L234 164 Z" stroke="#62a9de" stroke-width=".8" fill="#e6f0f8"/><rect x="240.5" y="129.5" width="100" height="35" fill="#fff" stroke="#62a9de" stroke-width="1"/><path d="M256.8 130V164M273.7 130V164M290.5 130V164M307.3 130V164M324.2 130V164M241 132.6H340M241 136.2H340M241 139.8H340M241 143.4H340M241 147.0H340M241 150.6H340M241 154.2H340M241 157.8H340M241 161.4H340" stroke="#dfedf8" stroke-width=".6" fill="none"/><path d="M241 164 L288 164 L292 161 L335 161 L340 164" stroke="#62a9de" stroke-width=".8" fill="none"/><rect x="135.5" y="180.5" width="206" height="32" fill="#fff" stroke="#62a9de" stroke-width="1"/><path d="M155.7 181V212M176.4 181V212M197.1 181V212M217.8 181V212M238.5 181V212M259.2 181V212M279.9 181V212M300.6 181V212M321.3 181V212M136 185.5H341M136 191.0H341M136 196.5H341M136 202.0H341M136 207.5H341" stroke="#dfedf8" stroke-width=".6" fill="none"/><path d="M136 211 L260 211 L262 210 L341 210" stroke="#62a9de" stroke-width=".8" fill="none"/><rect x="135.5" y="225.5" width="206" height="32" fill="#fff" stroke="#62a9de" stroke-width="1"/><path d="M155.7 226V257M176.4 226V257M197.1 226V257M217.8 226V257M238.5 226V257M259.2 226V257M279.9 226V257M300.6 226V257M321.3 226V257M136 230.5H341M136 236.0H341M136 241.5H341M136 247.0H341M136 252.5H341" stroke="#dfedf8" stroke-width=".6" fill="none"/><path d="M136 256 L341 256" stroke="#62a9de" stroke-width=".8" fill="none"/>
  <path d="M121.5 48V296" stroke="#e5e5e5" stroke-width="1"/>
 </svg>
 <span class="t" style="left:41px;top:46.5px;font-size:8.5px;color:#1a1a1a">CPU</span>
 <span class="t" style="left:41px;top:57px;font-size:6.3px;color:#333">13% 4.61 GHz</span>
 <span class="t" style="left:41px;top:76px;font-size:8.5px;color:#1a1a1a"><span class="z">内存</span></span>
 <span class="t" style="left:41px;top:87px;font-size:6.3px;color:#333">8.8/63.3 GB (14%)</span>
 <span class="t" style="left:41px;top:106px;font-size:8.5px;color:#1a1a1a"><span class="z">磁盘</span> 0 (C:)</span>
 <span class="t" style="left:41px;top:116.5px;font-size:6.3px;color:#333">SSD</span>
 <span class="t" style="left:41px;top:125px;font-size:6.3px;color:#333">0%</span>
 <span class="t" style="left:41px;top:141px;font-size:8.5px;color:#1a1a1a"><span class="z">磁盘</span> 1 (D:)</span>
 <span class="t" style="left:41px;top:151.5px;font-size:6.3px;color:#333">SSD</span>
 <span class="t" style="left:41px;top:160px;font-size:6.3px;color:#333">0%</span>
 <span class="t" style="left:41px;top:175px;font-size:8.5px;color:#1a1a1a"><span class="z">磁盘</span> 2 (E:)</span>
 <span class="t" style="left:41px;top:185.5px;font-size:6.3px;color:#333">USB</span>
 <span class="t" style="left:41px;top:194px;font-size:6.3px;color:#333">0%</span>
 <span class="t" style="left:41px;top:210px;font-size:8.5px;color:#1a1a1a"><span class="z">以太网</span></span>
 <span class="t" style="left:41px;top:220.5px;font-size:6.3px;color:#333"><span class="z">以太网</span> 6</span>
 <span class="t" style="left:41px;top:229px;font-size:6.3px;color:#333"><span style="color:#888"><span class="z">发送</span>:</span> 0 <span style="color:#888"><span class="z">接收</span>:</span> 16.0 Kbps</span>
 <span class="t" style="left:41px;top:245px;font-size:8.5px;color:#1a1a1a">GPU 0</span>
 <span class="t" style="left:41px;top:255.5px;font-size:6.3px;color:#333">Intel(R) Arc(TM) A770 ...</span>
 <span class="t" style="left:41px;top:263.5px;font-size:6.3px;color:#333">1% (50 °C)</span>
 <span class="t" style="left:133px;top:47px;font-size:14px;color:#111">GPU</span>
 <span class="t" style="right:20px;top:51.5px;font-size:8.3px;color:#222">Intel(R) Arc(TM) A770 Graphics</span>
 <span class="t" style="left:137px;top:68px;font-size:6.5px;color:#444"><svg width="5" height="4" viewBox="0 0 5 4" style="vertical-align:middle;margin-right:2px"><path d="M.8 1l1.7 1.7L4.2 1" fill="none" stroke="#666" stroke-width=".6"/></svg>3D</span>
 <span class="t" style="right:127px;top:68px;font-size:5px;color:#777">1%</span>
 <span class="t" style="left:241px;top:68px;font-size:6.5px;color:#444"><svg width="5" height="4" viewBox="0 0 5 4" style="vertical-align:middle;margin-right:2px"><path d="M.8 1l1.7 1.7L4.2 1" fill="none" stroke="#666" stroke-width=".6"/></svg>Copy</span>
 <span class="t" style="right:22px;top:68px;font-size:5px;color:#777">0%</span>
 <span class="t" style="left:137px;top:119px;font-size:6.5px;color:#444"><svg width="5" height="4" viewBox="0 0 5 4" style="vertical-align:middle;margin-right:2px"><path d="M.8 1l1.7 1.7L4.2 1" fill="none" stroke="#666" stroke-width=".6"/></svg>Video Decode</span>
 <span class="t" style="right:127px;top:119px;font-size:5px;color:#777">0%</span>
 <span class="t" style="left:241px;top:119px;font-size:6.5px;color:#444"><svg width="5" height="4" viewBox="0 0 5 4" style="vertical-align:middle;margin-right:2px"><path d="M.8 1l1.7 1.7L4.2 1" fill="none" stroke="#666" stroke-width=".6"/></svg>Video Processing</span>
 <span class="t" style="right:22px;top:119px;font-size:5px;color:#777">0%</span>
 <span class="t" style="left:135px;top:173px;font-size:5px;color:#777"><span class="z">专用</span> GPU <span class="z">内存利用率</span></span>
 <span class="t" style="right:21px;top:173px;font-size:5px;color:#777">16.0 GB</span>
 <span class="t" style="left:135px;top:217px;font-size:5px;color:#777"><span class="z">共享</span> GPU <span class="z">内存利用率</span></span>
 <span class="t" style="right:21px;top:217px;font-size:5px;color:#777">31.7 GB</span>
 <div class="a" style="left:0;top:266.5px;width:363px;height:32.5px;overflow:hidden">
  <span class="t" style="left:134px;top:2px;font-size:5.5px;color:#777"><span class="z">利用率</span></span>
  <span class="t" style="left:134px;top:9.5px;font-size:11px;color:#111">1%</span>
  <span class="t" style="left:134px;top:27.5px;font-size:5.5px;color:#777">GPU <span class="z">内存</span></span>
  <span class="t" style="left:200px;top:2px;font-size:5.5px;color:#777"><span class="z">专用</span> GPU <span class="z">内存</span></span>
  <span class="t" style="left:200px;top:9.5px;font-size:11px;color:#111">1.4/16.0 GB</span>
  <span class="t" style="left:200px;top:27.5px;font-size:5.5px;color:#777"><span class="z">共享</span> GPU <span class="z">内存</span></span>
  <span class="t" style="left:262px;top:2px;font-size:5.5px;color:#777"><span class="z">驱动程序版本</span>:</span>
  <span class="t" style="left:262px;top:11.5px;font-size:5.5px;color:#777"><span class="z">驱动程序日期</span>:</span>
  <span class="t" style="left:262px;top:21px;font-size:5.5px;color:#777">DirectX <span class="z">版本</span>:</span>
  <span class="t" style="left:262px;top:30.5px;font-size:5.5px;color:#777"><span class="z">物理位置</span>:</span>
  <span class="t" style="left:323px;top:2px;font-size:5.5px;color:#222">31.0....</span>
  <span class="t" style="left:323px;top:11.5px;font-size:5.5px;color:#222">2022....</span>
  <span class="t" style="left:323px;top:21px;font-size:5.5px;color:#222">12 (F...</span>
  <span class="t" style="left:323px;top:30.5px;font-size:5.5px;color:#222">PCI...</span>
 </div>
 <div class="a" style="left:355px;top:40px;width:8px;height:259px;background:#f0f0f0"></div>
 <div class="a" style="left:357.5px;top:48px;width:2px;height:202px;background:#c5c5c5;border-radius:1px"></div>
 <div class="a" style="left:0;top:299px;width:363px;height:22px;background:#fff"></div>
 <svg class="a" style="left:5px;top:306px" width="8" height="6" viewBox="0 0 8 6"><path d="M1.5 4l2.5-2.5L6.5 4" fill="none" stroke="#555" stroke-width=".7"/></svg>
 <span class="t" style="left:16px;top:306.5px;font-size:6.3px;color:#333"><span class="z">简略信息</span>(D)</span>
 <div class="a" style="left:54px;top:305px;width:1px;height:8px;background:#ccc"></div>
 <svg class="a" style="left:58px;top:305px" width="9" height="9" viewBox="0 0 9 9"><circle cx="4.5" cy="4.5" r="3.5" fill="none" stroke="#d24a4a" stroke-width=".9"/><path d="M3 5.5l1.5-2 1.5 2" fill="none" stroke="#d24a4a" stroke-width=".7"/></svg>
 <span class="t" style="left:69px;top:306.5px;font-size:6.3px;color:#0a62c4"><span class="z">打开资源监视器</span></span>
</div>
<!-- clock -->
<div class="a" id="clock" style="left:619px;top:421px;width:615px;height:268px;background:#f7f9fc;border:1px solid #3f8fd8;border-bottom:none;border-radius:5px 5px 0 0;overflow:hidden;color:#222">
 <div class="a" style="left:0;top:0;width:111px;height:267px;background:#eff2f7"></div>
 <div class="a" style="left:1px;top:78px;width:107px;height:18px;background:#e4e7ec;border-radius:3px"></div>
 <div class="a" style="left:1.5px;top:82.5px;width:1.5px;height:9px;background:#0a64c2;border-radius:1px"></div>
 <svg class="a" style="left:4px;top:1.5px" width="20" height="112" viewBox="0 0 20 112" fill="none" stroke="#444" stroke-width=".8">
  <rect x="3.5" y="3" width="7" height="6.5" rx="1"/><path d="M5.5 6l1.5 1.5L9.5 4.5"/>
  <circle cx="7" cy="25" r="3.5"/><path d="M7 21.5v7" /><path d="M7 21.5a3.5 3.5 0 0 1 0 7Z" fill="#444"/>
  <path d="M4.8 41.5h4.4q0 2.8-2.2 3.5q2.2.7 2.2 3.5H4.8q0-2.8 2.2-3.5q-2.2-.7-2.2-3.5Z"/>
  <path d="M3.8 67.5h6.4M4.8 67.5v-3a2.2 2.2 0 0 1 4.4 0v3M6.2 69h1.6"/>
  <circle cx="7" cy="85" r="3.5"/><path d="M7 83v2.3M6 80.8h2"/>
  <circle cx="7" cy="104" r="3.5"/><path d="M5 102q1.5 1.5 1 3.5M8.5 101.5q-.5 2 .5 3"/>
 </svg>
 <span class="t" style="left:23px;top:4.5px;font-size:6.3px;color:#333"><span class="z">时钟</span></span>
 <span class="t" style="left:23px;top:23.5px;font-size:6.3px;color:#333"><span class="z">专注时段</span></span>
 <span class="t" style="left:23px;top:43.5px;font-size:6.3px;color:#333"><span class="z">计时器</span></span>
 <span class="t" style="left:23px;top:63px;font-size:6.3px;color:#333"><span class="z">闹钟</span></span>
 <span class="t" style="left:23px;top:83px;font-size:6.3px;color:#333"><span class="z">秒表</span></span>
 <span class="t" style="left:23px;top:102.5px;font-size:6.3px;color:#333"><span class="z">世界时钟</span></span>
 <svg class="a" style="left:550px;top:2px" width="64" height="12" viewBox="0 0 64 12" fill="none" stroke="#444" stroke-width=".8"><path d="M5 6h5.5"/><rect x="27.5" y="3.5" width="5" height="5" rx=".8"/><path d="M50.5 3.5l5 5M55.5 3.5l-5 5"/></svg>
 <svg class="a" style="left:455px;top:90px" width="30" height="12" viewBox="0 0 30 12" fill="none" stroke="#555" stroke-width=".8"><path d="M2.5 9.5l6-6M5 3.5h3.5V7M2.5 6v3.5H6"/><rect x="22" y="3" width="6" height="6"/><path d="M22 6h3V3"/></svg>
  <span class="t" style="left:233.2px;top:96px;font-size:54px;color:#5d5e61;transform:scaleX(.93);transform-origin:0 0;">0</span>
 <span class="t" style="left:263.3px;top:96px;font-size:54px;color:#5d5e61;transform:scaleX(.93);transform-origin:0 0;">0</span>
 <span class="t" style="left:304.4px;top:96px;font-size:54px;color:#5d5e61;transform:scaleX(.93);transform-origin:0 0;">0</span>
 <span class="t" style="left:334.2px;top:96px;font-size:54px;color:#5d5e61;transform:scaleX(.93);transform-origin:0 0;">0</span>
 <span class="t" style="left:375.3px;top:96px;font-size:54px;color:#5d5e61;transform:scaleX(.93);transform-origin:0 0;">2</span>
 <span class="t" style="left:406.2px;top:96px;font-size:54px;color:#5d5e61;transform:scaleX(.93);transform-origin:0 0;">5</span>
 <span class="t" style="left:446px;top:108.7px;font-size:39px;color:#5d5e61;transform:scaleX(.93);transform-origin:0 0;">9</span>
 <span class="t" style="left:467.5px;top:108.7px;font-size:39px;color:#5d5e61;transform:scaleX(.93);transform-origin:0 0;">0</span>
 <svg class="a" style="left:290px;top:108px" width="160" height="40" viewBox="0 0 160 40" fill="#5d5e61"><circle cx="8" cy="5.5" r="2.9"/><circle cx="8" cy="28" r="2.9"/><circle cx="78.5" cy="5.5" r="2.9"/><circle cx="78.5" cy="28" r="2.9"/><circle cx="149" cy="33" r="3"/></svg>
 <span class="t" style="left:252px;top:154px;font-size:10px;color:#555"><span class="z">小时</span></span>
 <span class="t" style="left:324px;top:154px;font-size:10px;color:#555"><span class="z">分钟</span></span>
 <span class="t" style="left:401px;top:154px;font-size:10px;color:#555"><span class="z">秒</span></span>
<div class="a" style="left:299.5px;top:186.5px;width:33px;height:33px;background:#0067c0;border-radius:50%"></div>
 <svg class="a" style="left:299.5px;top:186.5px" width="33" height="33" viewBox="0 0 33 33"><path d="M13 10.5v12c0 .8.8 1.2 1.4.8l9-6c.6-.4.6-1.2 0-1.6l-9-6c-.6-.4-1.4 0-1.4.8Z" fill="#fff"/></svg>
 <div class="a" style="left:346px;top:187px;width:32px;height:32px;background:#f5f6f8;border:1px solid #e3e5e8;border-radius:50%"></div>
 <svg class="a" style="left:346px;top:187px" width="32" height="32" viewBox="0 0 32 32"><path d="M12 9v14" stroke="#a0a0a0" stroke-width="1.2"/><path d="M12 10h9l-2 3 2 3h-9Z" fill="#a0a0a0"/></svg>
 <div class="a" style="left:392px;top:187px;width:32px;height:32px;background:#fbfcfd;border:1px solid #e3e5e8;border-radius:50%"></div>
 <svg class="a" style="left:392px;top:187px" width="32" height="32" viewBox="0 0 32 32" fill="none" stroke="#333" stroke-width="1"><path d="M12.2 12.2A5.6 5.6 0 1 0 15.8 10.4"/><path d="M12.4 8.6L12.2 12.3L15.8 12.6"/></svg>
</div>
</body></html>
